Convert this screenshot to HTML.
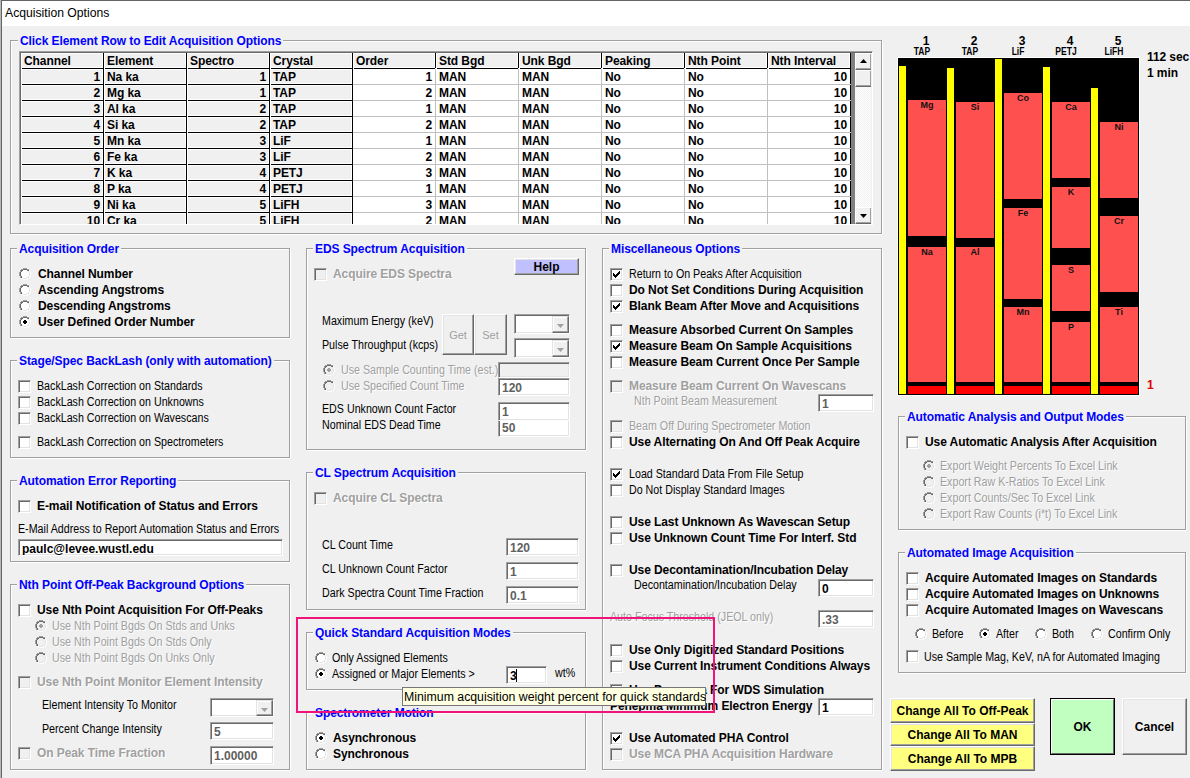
<!DOCTYPE html><html><head><meta charset="utf-8"><title>Acquisition Options</title><style>
*{margin:0;padding:0;box-sizing:border-box}
html,body{width:1190px;height:778px;overflow:hidden;background:#f0f0f0;font-family:"Liberation Sans",sans-serif;position:relative}
div,svg{position:absolute}
.t{white-space:nowrap;line-height:16px;height:16px;color:#000}
.b{font-weight:bold;font-size:12px;letter-spacing:-0.08px}
.n{font-weight:normal;font-size:12px;transform:scaleX(0.89);transform-origin:0 0}
.d{color:#a0a0a0;text-shadow:1px 1px 0 #fff}
.gb{border:1px solid #a0a0a0;box-shadow:inset 1px 1px 0 #fff,1px 1px 0 #fff}
.gt{white-space:nowrap;background:#f0f0f0;color:#0000ff;font-weight:bold;font-size:12px;line-height:16px;height:16px;padding:0 2px;letter-spacing:-0.08px}
.cb{width:13px;height:13px;background:#fff;border:1px solid;border-color:#a0a0a0 #fff #fff #a0a0a0;box-shadow:inset 1px 1px 0 #696969,inset -1px -1px 0 #e3e3e3}
.cb svg{left:1px;top:1px}
.cbd{background:#f0f0f0}
.tb{border-top:1px solid #a0a0a0;border-left:1px solid #a0a0a0;border-right:1px solid #fff;border-bottom:1px solid #fff;box-shadow:inset 1px 1px 0 #696969, inset -1px -1px 0 #e3e3e3;font-weight:bold;font-size:12px;line-height:16px;padding-left:3px;padding-top:1px;white-space:nowrap;overflow:hidden}
.cbtn{right:0;top:1px;width:17px;bottom:0;background:#f0f0f0;border:1px solid #e3e3e3;border-right-color:#696969;border-bottom-color:#696969;box-shadow:inset -1px -1px 0 #a0a0a0,inset 1px 1px 0 #fff}
.btn{text-align:center;white-space:nowrap;border:1px solid #fff;border-right-color:#696969;border-bottom-color:#696969;box-shadow:inset -1px -1px 0 #a0a0a0, inset 1px 1px 0 #e3e3e3}
.gc{position:absolute;overflow:hidden;white-space:nowrap;font-weight:bold;font-size:12px;line-height:16px;letter-spacing:-0.08px}
</style></head><body>
<div style="left:0;top:0;width:1190px;height:26px;background:#fff"></div>
<div style="left:0;top:0;width:1190px;height:1px;background:#646464"></div>
<div style="left:0;top:0;width:1px;height:778px;background:#b8b8b8"></div>
<div style="left:1px;top:0;width:1px;height:778px;background:#646464"></div>
<div class="t" style="left:5px;top:5px;font-size:12.2px;font-weight:normal">Acquisition Options</div>
<div class="gb" style="left:10px;top:40px;width:872px;height:194px"></div>
<div class="gt" style="left:18px;top:33px">Click Element Row to Edit Acquisition Options</div>
<div style="left:19px;top:51px;width:854px;height:174px;border-top:1px solid #a0a0a0;border-left:1px solid #a0a0a0;border-right:1px solid #fff;border-bottom:1px solid #fff;box-shadow:inset 1px 1px 0 #696969"></div>
<div style="left:21px;top:53px;width:850px;height:171px;overflow:hidden;background:#fff">
<div class="gc" style="left:0px;top:0px;width:82px;height:15px;background:#f0f0f0;box-shadow:inset 1px 1px 0 #fff,inset -1px -1px 0 #fff;text-align:left;padding-left:3px;">Channel</div>
<div class="gc" style="left:83px;top:0px;width:82px;height:15px;background:#f0f0f0;box-shadow:inset 1px 1px 0 #fff,inset -1px -1px 0 #fff;text-align:left;padding-left:3px;">Element</div>
<div class="gc" style="left:166px;top:0px;width:82px;height:15px;background:#f0f0f0;box-shadow:inset 1px 1px 0 #fff,inset -1px -1px 0 #fff;text-align:left;padding-left:3px;">Spectro</div>
<div class="gc" style="left:249px;top:0px;width:82px;height:15px;background:#f0f0f0;box-shadow:inset 1px 1px 0 #fff,inset -1px -1px 0 #fff;text-align:left;padding-left:3px;">Crystal</div>
<div class="gc" style="left:332px;top:0px;width:82px;height:15px;background:#f0f0f0;box-shadow:inset 1px 1px 0 #fff,inset -1px -1px 0 #fff;text-align:left;padding-left:3px;">Order</div>
<div class="gc" style="left:415px;top:0px;width:82px;height:15px;background:#f0f0f0;box-shadow:inset 1px 1px 0 #fff,inset -1px -1px 0 #fff;text-align:left;padding-left:3px;">Std Bgd</div>
<div class="gc" style="left:498px;top:0px;width:82px;height:15px;background:#f0f0f0;box-shadow:inset 1px 1px 0 #fff,inset -1px -1px 0 #fff;text-align:left;padding-left:3px;">Unk Bgd</div>
<div class="gc" style="left:581px;top:0px;width:82px;height:15px;background:#f0f0f0;box-shadow:inset 1px 1px 0 #fff,inset -1px -1px 0 #fff;text-align:left;padding-left:3px;">Peaking</div>
<div class="gc" style="left:664px;top:0px;width:82px;height:15px;background:#f0f0f0;box-shadow:inset 1px 1px 0 #fff,inset -1px -1px 0 #fff;text-align:left;padding-left:3px;">Nth Point</div>
<div class="gc" style="left:747px;top:0px;width:82px;height:15px;background:#f0f0f0;box-shadow:inset 1px 1px 0 #fff,inset -1px -1px 0 #fff;text-align:left;padding-left:3px;">Nth Interval</div>
<div class="gc" style="left:0px;top:16px;width:82px;height:15px;background:#f0f0f0;box-shadow:inset 1px 1px 0 #fff,inset -1px -1px 0 #fff;text-align:right;padding-right:3px;">1</div>
<div class="gc" style="left:83px;top:16px;width:82px;height:15px;background:#f0f0f0;box-shadow:inset 1px 1px 0 #fff,inset -1px -1px 0 #fff;text-align:left;padding-left:3px;">Na ka</div>
<div class="gc" style="left:166px;top:16px;width:82px;height:15px;background:#f0f0f0;box-shadow:inset 1px 1px 0 #fff,inset -1px -1px 0 #fff;text-align:right;padding-right:3px;">1</div>
<div class="gc" style="left:249px;top:16px;width:82px;height:15px;background:#f0f0f0;box-shadow:inset 1px 1px 0 #fff,inset -1px -1px 0 #fff;text-align:left;padding-left:3px;">TAP</div>
<div class="gc" style="left:332px;top:16px;width:82px;height:15px;background:#fff;text-align:right;padding-right:3px;">1</div>
<div class="gc" style="left:415px;top:16px;width:82px;height:15px;background:#fff;text-align:left;padding-left:3px;">MAN</div>
<div class="gc" style="left:498px;top:16px;width:82px;height:15px;background:#fff;text-align:left;padding-left:3px;">MAN</div>
<div class="gc" style="left:581px;top:16px;width:82px;height:15px;background:#fff;text-align:left;padding-left:3px;">No</div>
<div class="gc" style="left:664px;top:16px;width:82px;height:15px;background:#fff;text-align:left;padding-left:3px;">No</div>
<div class="gc" style="left:747px;top:16px;width:82px;height:15px;background:#fff;text-align:right;padding-right:3px;">10</div>
<div class="gc" style="left:0px;top:32px;width:82px;height:15px;background:#f0f0f0;box-shadow:inset 1px 1px 0 #fff,inset -1px -1px 0 #fff;text-align:right;padding-right:3px;">2</div>
<div class="gc" style="left:83px;top:32px;width:82px;height:15px;background:#f0f0f0;box-shadow:inset 1px 1px 0 #fff,inset -1px -1px 0 #fff;text-align:left;padding-left:3px;">Mg ka</div>
<div class="gc" style="left:166px;top:32px;width:82px;height:15px;background:#f0f0f0;box-shadow:inset 1px 1px 0 #fff,inset -1px -1px 0 #fff;text-align:right;padding-right:3px;">1</div>
<div class="gc" style="left:249px;top:32px;width:82px;height:15px;background:#f0f0f0;box-shadow:inset 1px 1px 0 #fff,inset -1px -1px 0 #fff;text-align:left;padding-left:3px;">TAP</div>
<div class="gc" style="left:332px;top:32px;width:82px;height:15px;background:#fff;text-align:right;padding-right:3px;">2</div>
<div class="gc" style="left:415px;top:32px;width:82px;height:15px;background:#fff;text-align:left;padding-left:3px;">MAN</div>
<div class="gc" style="left:498px;top:32px;width:82px;height:15px;background:#fff;text-align:left;padding-left:3px;">MAN</div>
<div class="gc" style="left:581px;top:32px;width:82px;height:15px;background:#fff;text-align:left;padding-left:3px;">No</div>
<div class="gc" style="left:664px;top:32px;width:82px;height:15px;background:#fff;text-align:left;padding-left:3px;">No</div>
<div class="gc" style="left:747px;top:32px;width:82px;height:15px;background:#fff;text-align:right;padding-right:3px;">10</div>
<div class="gc" style="left:0px;top:48px;width:82px;height:15px;background:#f0f0f0;box-shadow:inset 1px 1px 0 #fff,inset -1px -1px 0 #fff;text-align:right;padding-right:3px;">3</div>
<div class="gc" style="left:83px;top:48px;width:82px;height:15px;background:#f0f0f0;box-shadow:inset 1px 1px 0 #fff,inset -1px -1px 0 #fff;text-align:left;padding-left:3px;">Al ka</div>
<div class="gc" style="left:166px;top:48px;width:82px;height:15px;background:#f0f0f0;box-shadow:inset 1px 1px 0 #fff,inset -1px -1px 0 #fff;text-align:right;padding-right:3px;">2</div>
<div class="gc" style="left:249px;top:48px;width:82px;height:15px;background:#f0f0f0;box-shadow:inset 1px 1px 0 #fff,inset -1px -1px 0 #fff;text-align:left;padding-left:3px;">TAP</div>
<div class="gc" style="left:332px;top:48px;width:82px;height:15px;background:#fff;text-align:right;padding-right:3px;">1</div>
<div class="gc" style="left:415px;top:48px;width:82px;height:15px;background:#fff;text-align:left;padding-left:3px;">MAN</div>
<div class="gc" style="left:498px;top:48px;width:82px;height:15px;background:#fff;text-align:left;padding-left:3px;">MAN</div>
<div class="gc" style="left:581px;top:48px;width:82px;height:15px;background:#fff;text-align:left;padding-left:3px;">No</div>
<div class="gc" style="left:664px;top:48px;width:82px;height:15px;background:#fff;text-align:left;padding-left:3px;">No</div>
<div class="gc" style="left:747px;top:48px;width:82px;height:15px;background:#fff;text-align:right;padding-right:3px;">10</div>
<div class="gc" style="left:0px;top:64px;width:82px;height:15px;background:#f0f0f0;box-shadow:inset 1px 1px 0 #fff,inset -1px -1px 0 #fff;text-align:right;padding-right:3px;">4</div>
<div class="gc" style="left:83px;top:64px;width:82px;height:15px;background:#f0f0f0;box-shadow:inset 1px 1px 0 #fff,inset -1px -1px 0 #fff;text-align:left;padding-left:3px;">Si ka</div>
<div class="gc" style="left:166px;top:64px;width:82px;height:15px;background:#f0f0f0;box-shadow:inset 1px 1px 0 #fff,inset -1px -1px 0 #fff;text-align:right;padding-right:3px;">2</div>
<div class="gc" style="left:249px;top:64px;width:82px;height:15px;background:#f0f0f0;box-shadow:inset 1px 1px 0 #fff,inset -1px -1px 0 #fff;text-align:left;padding-left:3px;">TAP</div>
<div class="gc" style="left:332px;top:64px;width:82px;height:15px;background:#fff;text-align:right;padding-right:3px;">2</div>
<div class="gc" style="left:415px;top:64px;width:82px;height:15px;background:#fff;text-align:left;padding-left:3px;">MAN</div>
<div class="gc" style="left:498px;top:64px;width:82px;height:15px;background:#fff;text-align:left;padding-left:3px;">MAN</div>
<div class="gc" style="left:581px;top:64px;width:82px;height:15px;background:#fff;text-align:left;padding-left:3px;">No</div>
<div class="gc" style="left:664px;top:64px;width:82px;height:15px;background:#fff;text-align:left;padding-left:3px;">No</div>
<div class="gc" style="left:747px;top:64px;width:82px;height:15px;background:#fff;text-align:right;padding-right:3px;">10</div>
<div class="gc" style="left:0px;top:80px;width:82px;height:15px;background:#f0f0f0;box-shadow:inset 1px 1px 0 #fff,inset -1px -1px 0 #fff;text-align:right;padding-right:3px;">5</div>
<div class="gc" style="left:83px;top:80px;width:82px;height:15px;background:#f0f0f0;box-shadow:inset 1px 1px 0 #fff,inset -1px -1px 0 #fff;text-align:left;padding-left:3px;">Mn ka</div>
<div class="gc" style="left:166px;top:80px;width:82px;height:15px;background:#f0f0f0;box-shadow:inset 1px 1px 0 #fff,inset -1px -1px 0 #fff;text-align:right;padding-right:3px;">3</div>
<div class="gc" style="left:249px;top:80px;width:82px;height:15px;background:#f0f0f0;box-shadow:inset 1px 1px 0 #fff,inset -1px -1px 0 #fff;text-align:left;padding-left:3px;">LiF</div>
<div class="gc" style="left:332px;top:80px;width:82px;height:15px;background:#fff;text-align:right;padding-right:3px;">1</div>
<div class="gc" style="left:415px;top:80px;width:82px;height:15px;background:#fff;text-align:left;padding-left:3px;">MAN</div>
<div class="gc" style="left:498px;top:80px;width:82px;height:15px;background:#fff;text-align:left;padding-left:3px;">MAN</div>
<div class="gc" style="left:581px;top:80px;width:82px;height:15px;background:#fff;text-align:left;padding-left:3px;">No</div>
<div class="gc" style="left:664px;top:80px;width:82px;height:15px;background:#fff;text-align:left;padding-left:3px;">No</div>
<div class="gc" style="left:747px;top:80px;width:82px;height:15px;background:#fff;text-align:right;padding-right:3px;">10</div>
<div class="gc" style="left:0px;top:96px;width:82px;height:15px;background:#f0f0f0;box-shadow:inset 1px 1px 0 #fff,inset -1px -1px 0 #fff;text-align:right;padding-right:3px;">6</div>
<div class="gc" style="left:83px;top:96px;width:82px;height:15px;background:#f0f0f0;box-shadow:inset 1px 1px 0 #fff,inset -1px -1px 0 #fff;text-align:left;padding-left:3px;">Fe ka</div>
<div class="gc" style="left:166px;top:96px;width:82px;height:15px;background:#f0f0f0;box-shadow:inset 1px 1px 0 #fff,inset -1px -1px 0 #fff;text-align:right;padding-right:3px;">3</div>
<div class="gc" style="left:249px;top:96px;width:82px;height:15px;background:#f0f0f0;box-shadow:inset 1px 1px 0 #fff,inset -1px -1px 0 #fff;text-align:left;padding-left:3px;">LiF</div>
<div class="gc" style="left:332px;top:96px;width:82px;height:15px;background:#fff;text-align:right;padding-right:3px;">2</div>
<div class="gc" style="left:415px;top:96px;width:82px;height:15px;background:#fff;text-align:left;padding-left:3px;">MAN</div>
<div class="gc" style="left:498px;top:96px;width:82px;height:15px;background:#fff;text-align:left;padding-left:3px;">MAN</div>
<div class="gc" style="left:581px;top:96px;width:82px;height:15px;background:#fff;text-align:left;padding-left:3px;">No</div>
<div class="gc" style="left:664px;top:96px;width:82px;height:15px;background:#fff;text-align:left;padding-left:3px;">No</div>
<div class="gc" style="left:747px;top:96px;width:82px;height:15px;background:#fff;text-align:right;padding-right:3px;">10</div>
<div class="gc" style="left:0px;top:112px;width:82px;height:15px;background:#f0f0f0;box-shadow:inset 1px 1px 0 #fff,inset -1px -1px 0 #fff;text-align:right;padding-right:3px;">7</div>
<div class="gc" style="left:83px;top:112px;width:82px;height:15px;background:#f0f0f0;box-shadow:inset 1px 1px 0 #fff,inset -1px -1px 0 #fff;text-align:left;padding-left:3px;">K ka</div>
<div class="gc" style="left:166px;top:112px;width:82px;height:15px;background:#f0f0f0;box-shadow:inset 1px 1px 0 #fff,inset -1px -1px 0 #fff;text-align:right;padding-right:3px;">4</div>
<div class="gc" style="left:249px;top:112px;width:82px;height:15px;background:#f0f0f0;box-shadow:inset 1px 1px 0 #fff,inset -1px -1px 0 #fff;text-align:left;padding-left:3px;">PETJ</div>
<div class="gc" style="left:332px;top:112px;width:82px;height:15px;background:#fff;text-align:right;padding-right:3px;">3</div>
<div class="gc" style="left:415px;top:112px;width:82px;height:15px;background:#fff;text-align:left;padding-left:3px;">MAN</div>
<div class="gc" style="left:498px;top:112px;width:82px;height:15px;background:#fff;text-align:left;padding-left:3px;">MAN</div>
<div class="gc" style="left:581px;top:112px;width:82px;height:15px;background:#fff;text-align:left;padding-left:3px;">No</div>
<div class="gc" style="left:664px;top:112px;width:82px;height:15px;background:#fff;text-align:left;padding-left:3px;">No</div>
<div class="gc" style="left:747px;top:112px;width:82px;height:15px;background:#fff;text-align:right;padding-right:3px;">10</div>
<div class="gc" style="left:0px;top:128px;width:82px;height:15px;background:#f0f0f0;box-shadow:inset 1px 1px 0 #fff,inset -1px -1px 0 #fff;text-align:right;padding-right:3px;">8</div>
<div class="gc" style="left:83px;top:128px;width:82px;height:15px;background:#f0f0f0;box-shadow:inset 1px 1px 0 #fff,inset -1px -1px 0 #fff;text-align:left;padding-left:3px;">P ka</div>
<div class="gc" style="left:166px;top:128px;width:82px;height:15px;background:#f0f0f0;box-shadow:inset 1px 1px 0 #fff,inset -1px -1px 0 #fff;text-align:right;padding-right:3px;">4</div>
<div class="gc" style="left:249px;top:128px;width:82px;height:15px;background:#f0f0f0;box-shadow:inset 1px 1px 0 #fff,inset -1px -1px 0 #fff;text-align:left;padding-left:3px;">PETJ</div>
<div class="gc" style="left:332px;top:128px;width:82px;height:15px;background:#fff;text-align:right;padding-right:3px;">1</div>
<div class="gc" style="left:415px;top:128px;width:82px;height:15px;background:#fff;text-align:left;padding-left:3px;">MAN</div>
<div class="gc" style="left:498px;top:128px;width:82px;height:15px;background:#fff;text-align:left;padding-left:3px;">MAN</div>
<div class="gc" style="left:581px;top:128px;width:82px;height:15px;background:#fff;text-align:left;padding-left:3px;">No</div>
<div class="gc" style="left:664px;top:128px;width:82px;height:15px;background:#fff;text-align:left;padding-left:3px;">No</div>
<div class="gc" style="left:747px;top:128px;width:82px;height:15px;background:#fff;text-align:right;padding-right:3px;">10</div>
<div class="gc" style="left:0px;top:144px;width:82px;height:15px;background:#f0f0f0;box-shadow:inset 1px 1px 0 #fff,inset -1px -1px 0 #fff;text-align:right;padding-right:3px;">9</div>
<div class="gc" style="left:83px;top:144px;width:82px;height:15px;background:#f0f0f0;box-shadow:inset 1px 1px 0 #fff,inset -1px -1px 0 #fff;text-align:left;padding-left:3px;">Ni ka</div>
<div class="gc" style="left:166px;top:144px;width:82px;height:15px;background:#f0f0f0;box-shadow:inset 1px 1px 0 #fff,inset -1px -1px 0 #fff;text-align:right;padding-right:3px;">5</div>
<div class="gc" style="left:249px;top:144px;width:82px;height:15px;background:#f0f0f0;box-shadow:inset 1px 1px 0 #fff,inset -1px -1px 0 #fff;text-align:left;padding-left:3px;">LiFH</div>
<div class="gc" style="left:332px;top:144px;width:82px;height:15px;background:#fff;text-align:right;padding-right:3px;">3</div>
<div class="gc" style="left:415px;top:144px;width:82px;height:15px;background:#fff;text-align:left;padding-left:3px;">MAN</div>
<div class="gc" style="left:498px;top:144px;width:82px;height:15px;background:#fff;text-align:left;padding-left:3px;">MAN</div>
<div class="gc" style="left:581px;top:144px;width:82px;height:15px;background:#fff;text-align:left;padding-left:3px;">No</div>
<div class="gc" style="left:664px;top:144px;width:82px;height:15px;background:#fff;text-align:left;padding-left:3px;">No</div>
<div class="gc" style="left:747px;top:144px;width:82px;height:15px;background:#fff;text-align:right;padding-right:3px;">10</div>
<div class="gc" style="left:0px;top:160px;width:82px;height:15px;background:#f0f0f0;box-shadow:inset 1px 1px 0 #fff,inset -1px -1px 0 #fff;text-align:right;padding-right:3px;">10</div>
<div class="gc" style="left:83px;top:160px;width:82px;height:15px;background:#f0f0f0;box-shadow:inset 1px 1px 0 #fff,inset -1px -1px 0 #fff;text-align:left;padding-left:3px;">Cr ka</div>
<div class="gc" style="left:166px;top:160px;width:82px;height:15px;background:#f0f0f0;box-shadow:inset 1px 1px 0 #fff,inset -1px -1px 0 #fff;text-align:right;padding-right:3px;">5</div>
<div class="gc" style="left:249px;top:160px;width:82px;height:15px;background:#f0f0f0;box-shadow:inset 1px 1px 0 #fff,inset -1px -1px 0 #fff;text-align:left;padding-left:3px;">LiFH</div>
<div class="gc" style="left:332px;top:160px;width:82px;height:15px;background:#fff;text-align:right;padding-right:3px;">2</div>
<div class="gc" style="left:415px;top:160px;width:82px;height:15px;background:#fff;text-align:left;padding-left:3px;">MAN</div>
<div class="gc" style="left:498px;top:160px;width:82px;height:15px;background:#fff;text-align:left;padding-left:3px;">MAN</div>
<div class="gc" style="left:581px;top:160px;width:82px;height:15px;background:#fff;text-align:left;padding-left:3px;">No</div>
<div class="gc" style="left:664px;top:160px;width:82px;height:15px;background:#fff;text-align:left;padding-left:3px;">No</div>
<div class="gc" style="left:747px;top:160px;width:82px;height:15px;background:#fff;text-align:right;padding-right:3px;">10</div>
<div style="left:82px;top:0;width:1px;height:171px;background:#000"></div>
<div style="left:165px;top:0;width:1px;height:171px;background:#000"></div>
<div style="left:248px;top:0;width:1px;height:171px;background:#000"></div>
<div style="left:331px;top:0;width:1px;height:171px;background:#000"></div>
<div style="left:414px;top:0;width:1px;height:15px;background:#000"></div>
<div style="left:414px;top:16px;width:1px;height:155px;background:#c0c0c0"></div>
<div style="left:497px;top:0;width:1px;height:15px;background:#000"></div>
<div style="left:497px;top:16px;width:1px;height:155px;background:#c0c0c0"></div>
<div style="left:580px;top:0;width:1px;height:15px;background:#000"></div>
<div style="left:580px;top:16px;width:1px;height:155px;background:#c0c0c0"></div>
<div style="left:663px;top:0;width:1px;height:15px;background:#000"></div>
<div style="left:663px;top:16px;width:1px;height:155px;background:#c0c0c0"></div>
<div style="left:746px;top:0;width:1px;height:15px;background:#000"></div>
<div style="left:746px;top:16px;width:1px;height:155px;background:#c0c0c0"></div>
<div style="left:829px;top:0;width:1px;height:171px;background:#000"></div>
<div style="left:1px;top:15px;width:81px;height:1px;background:#000"></div>
<div style="left:84px;top:15px;width:81px;height:1px;background:#000"></div>
<div style="left:167px;top:15px;width:81px;height:1px;background:#000"></div>
<div style="left:250px;top:15px;width:81px;height:1px;background:#000"></div>
<div style="left:333px;top:15px;width:81px;height:1px;background:#000"></div>
<div style="left:416px;top:15px;width:81px;height:1px;background:#000"></div>
<div style="left:499px;top:15px;width:81px;height:1px;background:#000"></div>
<div style="left:582px;top:15px;width:81px;height:1px;background:#000"></div>
<div style="left:665px;top:15px;width:81px;height:1px;background:#000"></div>
<div style="left:748px;top:15px;width:81px;height:1px;background:#000"></div>
<div style="left:1px;top:31px;width:81px;height:1px;background:#000"></div>
<div style="left:84px;top:31px;width:81px;height:1px;background:#000"></div>
<div style="left:167px;top:31px;width:81px;height:1px;background:#000"></div>
<div style="left:250px;top:31px;width:81px;height:1px;background:#000"></div>
<div style="left:332px;top:31px;width:498px;height:1px;background:#c0c0c0"></div>
<div style="left:1px;top:47px;width:81px;height:1px;background:#000"></div>
<div style="left:84px;top:47px;width:81px;height:1px;background:#000"></div>
<div style="left:167px;top:47px;width:81px;height:1px;background:#000"></div>
<div style="left:250px;top:47px;width:81px;height:1px;background:#000"></div>
<div style="left:332px;top:47px;width:498px;height:1px;background:#c0c0c0"></div>
<div style="left:1px;top:63px;width:81px;height:1px;background:#000"></div>
<div style="left:84px;top:63px;width:81px;height:1px;background:#000"></div>
<div style="left:167px;top:63px;width:81px;height:1px;background:#000"></div>
<div style="left:250px;top:63px;width:81px;height:1px;background:#000"></div>
<div style="left:332px;top:63px;width:498px;height:1px;background:#c0c0c0"></div>
<div style="left:1px;top:79px;width:81px;height:1px;background:#000"></div>
<div style="left:84px;top:79px;width:81px;height:1px;background:#000"></div>
<div style="left:167px;top:79px;width:81px;height:1px;background:#000"></div>
<div style="left:250px;top:79px;width:81px;height:1px;background:#000"></div>
<div style="left:332px;top:79px;width:498px;height:1px;background:#c0c0c0"></div>
<div style="left:1px;top:95px;width:81px;height:1px;background:#000"></div>
<div style="left:84px;top:95px;width:81px;height:1px;background:#000"></div>
<div style="left:167px;top:95px;width:81px;height:1px;background:#000"></div>
<div style="left:250px;top:95px;width:81px;height:1px;background:#000"></div>
<div style="left:332px;top:95px;width:498px;height:1px;background:#c0c0c0"></div>
<div style="left:1px;top:111px;width:81px;height:1px;background:#000"></div>
<div style="left:84px;top:111px;width:81px;height:1px;background:#000"></div>
<div style="left:167px;top:111px;width:81px;height:1px;background:#000"></div>
<div style="left:250px;top:111px;width:81px;height:1px;background:#000"></div>
<div style="left:332px;top:111px;width:498px;height:1px;background:#c0c0c0"></div>
<div style="left:1px;top:127px;width:81px;height:1px;background:#000"></div>
<div style="left:84px;top:127px;width:81px;height:1px;background:#000"></div>
<div style="left:167px;top:127px;width:81px;height:1px;background:#000"></div>
<div style="left:250px;top:127px;width:81px;height:1px;background:#000"></div>
<div style="left:332px;top:127px;width:498px;height:1px;background:#c0c0c0"></div>
<div style="left:1px;top:143px;width:81px;height:1px;background:#000"></div>
<div style="left:84px;top:143px;width:81px;height:1px;background:#000"></div>
<div style="left:167px;top:143px;width:81px;height:1px;background:#000"></div>
<div style="left:250px;top:143px;width:81px;height:1px;background:#000"></div>
<div style="left:332px;top:143px;width:498px;height:1px;background:#c0c0c0"></div>
<div style="left:1px;top:159px;width:81px;height:1px;background:#000"></div>
<div style="left:84px;top:159px;width:81px;height:1px;background:#000"></div>
<div style="left:167px;top:159px;width:81px;height:1px;background:#000"></div>
<div style="left:250px;top:159px;width:81px;height:1px;background:#000"></div>
<div style="left:332px;top:159px;width:498px;height:1px;background:#c0c0c0"></div>
<div style="left:1px;top:175px;width:81px;height:1px;background:#000"></div>
<div style="left:84px;top:175px;width:81px;height:1px;background:#000"></div>
<div style="left:167px;top:175px;width:81px;height:1px;background:#000"></div>
<div style="left:250px;top:175px;width:81px;height:1px;background:#000"></div>
<div style="left:332px;top:175px;width:498px;height:1px;background:#c0c0c0"></div>
<div style="left:830px;top:0;width:4px;height:171px;background:#808080"></div>
<div style="left:834px;top:0;width:17px;height:171px;background:#f4f4f4;background-image:repeating-conic-gradient(#fff 0 25%, #f0f0f0 0 50%);background-size:2px 2px"></div>
<div style="left:834px;top:0px;width:17px;height:17px;background:#f0f0f0;border-top:1px solid #fff;border-left:1px solid #fff;border-right:1px solid #696969;border-bottom:1px solid #696969;box-shadow:inset -1px -1px 0 #a0a0a0"><svg width="17" height="16" style="left:0;top:0"><path d="M4 9h7l-3.5-4z" fill="#000"/></svg></div>
<div style="left:834px;top:17px;width:17px;height:17px;background:#f0f0f0;border-top:1px solid #fff;border-left:1px solid #fff;border-right:1px solid #696969;border-bottom:1px solid #696969;box-shadow:inset -1px -1px 0 #a0a0a0"></div>
<div style="left:834px;top:154px;width:17px;height:17px;background:#f0f0f0;border-top:1px solid #fff;border-left:1px solid #fff;border-right:1px solid #696969;border-bottom:1px solid #696969;box-shadow:inset -1px -1px 0 #a0a0a0"><svg width="17" height="16" style="left:0;top:0"><path d="M4 6h7l-3.5 4z" fill="#000"/></svg></div>
</div>
<div class="gb" style="left:10px;top:248px;width:280px;height:90px"></div>
<div class="gt" style="left:17px;top:241px">Acquisition Order</div>
<svg style="left:19px;top:268px" width="12" height="12"><path d="M5 1h2v1h-2zM3 2h6v1h-6zM3 3h6v1h-6zM2 4h8v1h-8zM2 5h8v1h-8zM2 6h8v1h-8zM2 7h8v1h-8zM3 8h6v1h-6zM3 9h6v1h-6zM5 10h2v1h-2z" fill="#fff"/><path d="M4 0h1v1h-1zM5 0h1v1h-1zM6 0h1v1h-1zM7 0h1v1h-1zM2 1h1v1h-1zM3 1h1v1h-1zM8 1h1v1h-1zM9 1h1v1h-1zM1 2h1v1h-1zM1 3h1v1h-1zM0 4h1v1h-1zM0 5h1v1h-1zM0 6h1v1h-1zM0 7h1v1h-1zM1 8h1v1h-1zM1 9h1v1h-1z" fill="#a0a0a0"/><path d="M10 2h1v1h-1zM10 3h1v1h-1zM11 4h1v1h-1zM11 5h1v1h-1zM11 6h1v1h-1zM11 7h1v1h-1zM10 8h1v1h-1zM10 9h1v1h-1zM2 10h1v1h-1zM3 10h1v1h-1zM8 10h1v1h-1zM9 10h1v1h-1zM4 11h1v1h-1zM5 11h1v1h-1zM6 11h1v1h-1zM7 11h1v1h-1z" fill="#fff"/><path d="M4 1h1v1h-1zM5 1h1v1h-1zM6 1h1v1h-1zM7 1h1v1h-1zM2 2h1v1h-1zM3 2h1v1h-1zM8 2h1v1h-1zM9 2h1v1h-1zM2 3h1v1h-1zM1 4h1v1h-1zM1 5h1v1h-1zM1 6h1v1h-1zM1 7h1v1h-1zM2 8h1v1h-1zM2 9h1v1h-1z" fill="#696969"/><path d="M9 3h1v1h-1zM10 4h1v1h-1zM10 5h1v1h-1zM10 6h1v1h-1zM10 7h1v1h-1zM9 8h1v1h-1zM3 9h1v1h-1zM8 9h1v1h-1zM9 9h1v1h-1zM4 10h1v1h-1zM5 10h1v1h-1zM6 10h1v1h-1zM7 10h1v1h-1z" fill="#e3e3e3"/></svg>
<div class="t b" style="left:38px;top:266px;">Channel Number</div>
<svg style="left:19px;top:284px" width="12" height="12"><path d="M5 1h2v1h-2zM3 2h6v1h-6zM3 3h6v1h-6zM2 4h8v1h-8zM2 5h8v1h-8zM2 6h8v1h-8zM2 7h8v1h-8zM3 8h6v1h-6zM3 9h6v1h-6zM5 10h2v1h-2z" fill="#fff"/><path d="M4 0h1v1h-1zM5 0h1v1h-1zM6 0h1v1h-1zM7 0h1v1h-1zM2 1h1v1h-1zM3 1h1v1h-1zM8 1h1v1h-1zM9 1h1v1h-1zM1 2h1v1h-1zM1 3h1v1h-1zM0 4h1v1h-1zM0 5h1v1h-1zM0 6h1v1h-1zM0 7h1v1h-1zM1 8h1v1h-1zM1 9h1v1h-1z" fill="#a0a0a0"/><path d="M10 2h1v1h-1zM10 3h1v1h-1zM11 4h1v1h-1zM11 5h1v1h-1zM11 6h1v1h-1zM11 7h1v1h-1zM10 8h1v1h-1zM10 9h1v1h-1zM2 10h1v1h-1zM3 10h1v1h-1zM8 10h1v1h-1zM9 10h1v1h-1zM4 11h1v1h-1zM5 11h1v1h-1zM6 11h1v1h-1zM7 11h1v1h-1z" fill="#fff"/><path d="M4 1h1v1h-1zM5 1h1v1h-1zM6 1h1v1h-1zM7 1h1v1h-1zM2 2h1v1h-1zM3 2h1v1h-1zM8 2h1v1h-1zM9 2h1v1h-1zM2 3h1v1h-1zM1 4h1v1h-1zM1 5h1v1h-1zM1 6h1v1h-1zM1 7h1v1h-1zM2 8h1v1h-1zM2 9h1v1h-1z" fill="#696969"/><path d="M9 3h1v1h-1zM10 4h1v1h-1zM10 5h1v1h-1zM10 6h1v1h-1zM10 7h1v1h-1zM9 8h1v1h-1zM3 9h1v1h-1zM8 9h1v1h-1zM9 9h1v1h-1zM4 10h1v1h-1zM5 10h1v1h-1zM6 10h1v1h-1zM7 10h1v1h-1z" fill="#e3e3e3"/></svg>
<div class="t b" style="left:38px;top:282px;">Ascending Angstroms</div>
<svg style="left:19px;top:300px" width="12" height="12"><path d="M5 1h2v1h-2zM3 2h6v1h-6zM3 3h6v1h-6zM2 4h8v1h-8zM2 5h8v1h-8zM2 6h8v1h-8zM2 7h8v1h-8zM3 8h6v1h-6zM3 9h6v1h-6zM5 10h2v1h-2z" fill="#fff"/><path d="M4 0h1v1h-1zM5 0h1v1h-1zM6 0h1v1h-1zM7 0h1v1h-1zM2 1h1v1h-1zM3 1h1v1h-1zM8 1h1v1h-1zM9 1h1v1h-1zM1 2h1v1h-1zM1 3h1v1h-1zM0 4h1v1h-1zM0 5h1v1h-1zM0 6h1v1h-1zM0 7h1v1h-1zM1 8h1v1h-1zM1 9h1v1h-1z" fill="#a0a0a0"/><path d="M10 2h1v1h-1zM10 3h1v1h-1zM11 4h1v1h-1zM11 5h1v1h-1zM11 6h1v1h-1zM11 7h1v1h-1zM10 8h1v1h-1zM10 9h1v1h-1zM2 10h1v1h-1zM3 10h1v1h-1zM8 10h1v1h-1zM9 10h1v1h-1zM4 11h1v1h-1zM5 11h1v1h-1zM6 11h1v1h-1zM7 11h1v1h-1z" fill="#fff"/><path d="M4 1h1v1h-1zM5 1h1v1h-1zM6 1h1v1h-1zM7 1h1v1h-1zM2 2h1v1h-1zM3 2h1v1h-1zM8 2h1v1h-1zM9 2h1v1h-1zM2 3h1v1h-1zM1 4h1v1h-1zM1 5h1v1h-1zM1 6h1v1h-1zM1 7h1v1h-1zM2 8h1v1h-1zM2 9h1v1h-1z" fill="#696969"/><path d="M9 3h1v1h-1zM10 4h1v1h-1zM10 5h1v1h-1zM10 6h1v1h-1zM10 7h1v1h-1zM9 8h1v1h-1zM3 9h1v1h-1zM8 9h1v1h-1zM9 9h1v1h-1zM4 10h1v1h-1zM5 10h1v1h-1zM6 10h1v1h-1zM7 10h1v1h-1z" fill="#e3e3e3"/></svg>
<div class="t b" style="left:38px;top:298px;">Descending Angstroms</div>
<svg style="left:19px;top:316px" width="12" height="12"><path d="M5 1h2v1h-2zM3 2h6v1h-6zM3 3h6v1h-6zM2 4h8v1h-8zM2 5h8v1h-8zM2 6h8v1h-8zM2 7h8v1h-8zM3 8h6v1h-6zM3 9h6v1h-6zM5 10h2v1h-2z" fill="#fff"/><path d="M4 0h1v1h-1zM5 0h1v1h-1zM6 0h1v1h-1zM7 0h1v1h-1zM2 1h1v1h-1zM3 1h1v1h-1zM8 1h1v1h-1zM9 1h1v1h-1zM1 2h1v1h-1zM1 3h1v1h-1zM0 4h1v1h-1zM0 5h1v1h-1zM0 6h1v1h-1zM0 7h1v1h-1zM1 8h1v1h-1zM1 9h1v1h-1z" fill="#a0a0a0"/><path d="M10 2h1v1h-1zM10 3h1v1h-1zM11 4h1v1h-1zM11 5h1v1h-1zM11 6h1v1h-1zM11 7h1v1h-1zM10 8h1v1h-1zM10 9h1v1h-1zM2 10h1v1h-1zM3 10h1v1h-1zM8 10h1v1h-1zM9 10h1v1h-1zM4 11h1v1h-1zM5 11h1v1h-1zM6 11h1v1h-1zM7 11h1v1h-1z" fill="#fff"/><path d="M4 1h1v1h-1zM5 1h1v1h-1zM6 1h1v1h-1zM7 1h1v1h-1zM2 2h1v1h-1zM3 2h1v1h-1zM8 2h1v1h-1zM9 2h1v1h-1zM2 3h1v1h-1zM1 4h1v1h-1zM1 5h1v1h-1zM1 6h1v1h-1zM1 7h1v1h-1zM2 8h1v1h-1zM2 9h1v1h-1z" fill="#696969"/><path d="M9 3h1v1h-1zM10 4h1v1h-1zM10 5h1v1h-1zM10 6h1v1h-1zM10 7h1v1h-1zM9 8h1v1h-1zM3 9h1v1h-1zM8 9h1v1h-1zM9 9h1v1h-1zM4 10h1v1h-1zM5 10h1v1h-1zM6 10h1v1h-1zM7 10h1v1h-1z" fill="#e3e3e3"/><path d="M5 4h2v1h1v2h-1v1h-2v-1h-1v-2h1z" fill="#000"/></svg>
<div class="t b" style="left:38px;top:314px;">User Defined Order Number</div>
<div class="gb" style="left:10px;top:360px;width:280px;height:98px"></div>
<div class="gt" style="left:17px;top:353px">Stage/Spec BackLash (only with automation)</div>
<div class="cb" style="left:18px;top:380px"></div>
<div class="t n" style="left:37px;top:378px;">BackLash Correction on Standards</div>
<div class="cb" style="left:18px;top:396px"></div>
<div class="t n" style="left:37px;top:394px;">BackLash Correction on Unknowns</div>
<div class="cb" style="left:18px;top:412px"></div>
<div class="t n" style="left:37px;top:410px;">BackLash Correction on Wavescans</div>
<div class="cb" style="left:18px;top:436px"></div>
<div class="t n" style="left:37px;top:434px;">BackLash Correction on Spectrometers</div>
<div class="gb" style="left:10px;top:480px;width:280px;height:82px"></div>
<div class="gt" style="left:17px;top:473px">Automation Error Reporting</div>
<div class="cb" style="left:18px;top:500px"></div>
<div class="t b" style="left:37px;top:498px;">E-mail Notification of Status and Errors</div>
<div class="t n" style="left:18px;top:521px;">E-Mail Address to Report Automation Status and Errors</div>
<div class="tb" style="left:18px;top:539px;width:265px;height:17px;background:#fff;color:#000;">paulc@levee.wustl.edu</div>
<div class="gb" style="left:10px;top:584px;width:280px;height:186px"></div>
<div class="gt" style="left:17px;top:577px">Nth Point Off-Peak Background Options</div>
<div class="cb" style="left:18px;top:604px"></div>
<div class="t b" style="left:37px;top:602px;">Use Nth Point Acquisition For Off-Peaks</div>
<svg style="left:35px;top:620px" width="12" height="12"><path d="M5 1h2v1h-2zM3 2h6v1h-6zM3 3h6v1h-6zM2 4h8v1h-8zM2 5h8v1h-8zM2 6h8v1h-8zM2 7h8v1h-8zM3 8h6v1h-6zM3 9h6v1h-6zM5 10h2v1h-2z" fill="#f0f0f0"/><path d="M4 0h1v1h-1zM5 0h1v1h-1zM6 0h1v1h-1zM7 0h1v1h-1zM2 1h1v1h-1zM3 1h1v1h-1zM8 1h1v1h-1zM9 1h1v1h-1zM1 2h1v1h-1zM1 3h1v1h-1zM0 4h1v1h-1zM0 5h1v1h-1zM0 6h1v1h-1zM0 7h1v1h-1zM1 8h1v1h-1zM1 9h1v1h-1z" fill="#a0a0a0"/><path d="M10 2h1v1h-1zM10 3h1v1h-1zM11 4h1v1h-1zM11 5h1v1h-1zM11 6h1v1h-1zM11 7h1v1h-1zM10 8h1v1h-1zM10 9h1v1h-1zM2 10h1v1h-1zM3 10h1v1h-1zM8 10h1v1h-1zM9 10h1v1h-1zM4 11h1v1h-1zM5 11h1v1h-1zM6 11h1v1h-1zM7 11h1v1h-1z" fill="#fff"/><path d="M4 1h1v1h-1zM5 1h1v1h-1zM6 1h1v1h-1zM7 1h1v1h-1zM2 2h1v1h-1zM3 2h1v1h-1zM8 2h1v1h-1zM9 2h1v1h-1zM2 3h1v1h-1zM1 4h1v1h-1zM1 5h1v1h-1zM1 6h1v1h-1zM1 7h1v1h-1zM2 8h1v1h-1zM2 9h1v1h-1z" fill="#696969"/><path d="M9 3h1v1h-1zM10 4h1v1h-1zM10 5h1v1h-1zM10 6h1v1h-1zM10 7h1v1h-1zM9 8h1v1h-1zM3 9h1v1h-1zM8 9h1v1h-1zM9 9h1v1h-1zM4 10h1v1h-1zM5 10h1v1h-1zM6 10h1v1h-1zM7 10h1v1h-1z" fill="#e3e3e3"/><path d="M5 4h2v1h1v2h-1v1h-2v-1h-1v-2h1z" fill="#a0a0a0"/></svg>
<div class="t n d" style="left:52px;top:618px;">Use Nth Point Bgds On Stds and Unks</div>
<svg style="left:35px;top:636px" width="12" height="12"><path d="M5 1h2v1h-2zM3 2h6v1h-6zM3 3h6v1h-6zM2 4h8v1h-8zM2 5h8v1h-8zM2 6h8v1h-8zM2 7h8v1h-8zM3 8h6v1h-6zM3 9h6v1h-6zM5 10h2v1h-2z" fill="#f0f0f0"/><path d="M4 0h1v1h-1zM5 0h1v1h-1zM6 0h1v1h-1zM7 0h1v1h-1zM2 1h1v1h-1zM3 1h1v1h-1zM8 1h1v1h-1zM9 1h1v1h-1zM1 2h1v1h-1zM1 3h1v1h-1zM0 4h1v1h-1zM0 5h1v1h-1zM0 6h1v1h-1zM0 7h1v1h-1zM1 8h1v1h-1zM1 9h1v1h-1z" fill="#a0a0a0"/><path d="M10 2h1v1h-1zM10 3h1v1h-1zM11 4h1v1h-1zM11 5h1v1h-1zM11 6h1v1h-1zM11 7h1v1h-1zM10 8h1v1h-1zM10 9h1v1h-1zM2 10h1v1h-1zM3 10h1v1h-1zM8 10h1v1h-1zM9 10h1v1h-1zM4 11h1v1h-1zM5 11h1v1h-1zM6 11h1v1h-1zM7 11h1v1h-1z" fill="#fff"/><path d="M4 1h1v1h-1zM5 1h1v1h-1zM6 1h1v1h-1zM7 1h1v1h-1zM2 2h1v1h-1zM3 2h1v1h-1zM8 2h1v1h-1zM9 2h1v1h-1zM2 3h1v1h-1zM1 4h1v1h-1zM1 5h1v1h-1zM1 6h1v1h-1zM1 7h1v1h-1zM2 8h1v1h-1zM2 9h1v1h-1z" fill="#696969"/><path d="M9 3h1v1h-1zM10 4h1v1h-1zM10 5h1v1h-1zM10 6h1v1h-1zM10 7h1v1h-1zM9 8h1v1h-1zM3 9h1v1h-1zM8 9h1v1h-1zM9 9h1v1h-1zM4 10h1v1h-1zM5 10h1v1h-1zM6 10h1v1h-1zM7 10h1v1h-1z" fill="#e3e3e3"/></svg>
<div class="t n d" style="left:52px;top:634px;">Use Nth Point Bgds On Stds Only</div>
<svg style="left:35px;top:652px" width="12" height="12"><path d="M5 1h2v1h-2zM3 2h6v1h-6zM3 3h6v1h-6zM2 4h8v1h-8zM2 5h8v1h-8zM2 6h8v1h-8zM2 7h8v1h-8zM3 8h6v1h-6zM3 9h6v1h-6zM5 10h2v1h-2z" fill="#f0f0f0"/><path d="M4 0h1v1h-1zM5 0h1v1h-1zM6 0h1v1h-1zM7 0h1v1h-1zM2 1h1v1h-1zM3 1h1v1h-1zM8 1h1v1h-1zM9 1h1v1h-1zM1 2h1v1h-1zM1 3h1v1h-1zM0 4h1v1h-1zM0 5h1v1h-1zM0 6h1v1h-1zM0 7h1v1h-1zM1 8h1v1h-1zM1 9h1v1h-1z" fill="#a0a0a0"/><path d="M10 2h1v1h-1zM10 3h1v1h-1zM11 4h1v1h-1zM11 5h1v1h-1zM11 6h1v1h-1zM11 7h1v1h-1zM10 8h1v1h-1zM10 9h1v1h-1zM2 10h1v1h-1zM3 10h1v1h-1zM8 10h1v1h-1zM9 10h1v1h-1zM4 11h1v1h-1zM5 11h1v1h-1zM6 11h1v1h-1zM7 11h1v1h-1z" fill="#fff"/><path d="M4 1h1v1h-1zM5 1h1v1h-1zM6 1h1v1h-1zM7 1h1v1h-1zM2 2h1v1h-1zM3 2h1v1h-1zM8 2h1v1h-1zM9 2h1v1h-1zM2 3h1v1h-1zM1 4h1v1h-1zM1 5h1v1h-1zM1 6h1v1h-1zM1 7h1v1h-1zM2 8h1v1h-1zM2 9h1v1h-1z" fill="#696969"/><path d="M9 3h1v1h-1zM10 4h1v1h-1zM10 5h1v1h-1zM10 6h1v1h-1zM10 7h1v1h-1zM9 8h1v1h-1zM3 9h1v1h-1zM8 9h1v1h-1zM9 9h1v1h-1zM4 10h1v1h-1zM5 10h1v1h-1zM6 10h1v1h-1zM7 10h1v1h-1z" fill="#e3e3e3"/></svg>
<div class="t n d" style="left:52px;top:650px;">Use Nth Point Bgds On Unks Only</div>
<div class="cb cbd" style="left:18px;top:676px"></div>
<div class="t b d" style="left:37px;top:674px;">Use Nth Point Monitor Element Intensity</div>
<div class="t n" style="left:42px;top:697px;">Element Intensity To Monitor</div>
<div class="tb" style="left:210px;top:698px;width:64px;height:19px;background:#fff"><div class="cbtn"><svg width="16" height="16" style="left:0;top:0"><path d="M4 7h7l-3.5 4z" fill="#a0a0a0"/></svg></div></div>
<div class="t n" style="left:42px;top:721px;">Percent Change Intensity</div>
<div class="tb" style="left:210px;top:722px;width:64px;height:18px;background:#fff;color:#606060;">5</div>
<div class="cb cbd" style="left:18px;top:747px"></div>
<div class="t b d" style="left:37px;top:745px;">On Peak Time Fraction</div>
<div class="tb" style="left:210px;top:746px;width:64px;height:19px;background:#fff;color:#606060;">1.00000</div>
<div class="gb" style="left:306px;top:248px;width:280px;height:202px"></div>
<div class="gt" style="left:313px;top:241px">EDS Spectrum Acquisition</div>
<div class="btn" style="left:514px;top:258px;width:65px;height:17px;background:#c0c0ff;color:#000;font-weight:bold;line-height:16px;font-size:12px;">Help</div>
<div class="cb cbd" style="left:314px;top:268px"></div>
<div class="t b d" style="left:333px;top:266px;">Acquire EDS Spectra</div>
<div class="t n" style="left:322px;top:313px;">Maximum Energy (keV)</div>
<div class="t n" style="left:322px;top:337px;">Pulse Throughput (kcps)</div>
<div class="btn" style="left:442px;top:314px;width:32px;height:41px;background:#f0f0f0;color:#a0a0a0;font-weight:normal;line-height:40px;font-size:11px;">Get</div>
<div class="btn" style="left:474px;top:314px;width:33px;height:41px;background:#f0f0f0;color:#a0a0a0;font-weight:normal;line-height:40px;font-size:11px;">Set</div>
<div class="tb" style="left:514px;top:314px;width:56px;height:20px;background:#fff"><div class="cbtn"><svg width="16" height="16" style="left:0;top:0"><path d="M4 7h7l-3.5 4z" fill="#a0a0a0"/></svg></div></div>
<div class="tb" style="left:514px;top:338px;width:56px;height:20px;background:#fff"><div class="cbtn"><svg width="16" height="16" style="left:0;top:0"><path d="M4 7h7l-3.5 4z" fill="#a0a0a0"/></svg></div></div>
<svg style="left:323px;top:364px" width="12" height="12"><path d="M5 1h2v1h-2zM3 2h6v1h-6zM3 3h6v1h-6zM2 4h8v1h-8zM2 5h8v1h-8zM2 6h8v1h-8zM2 7h8v1h-8zM3 8h6v1h-6zM3 9h6v1h-6zM5 10h2v1h-2z" fill="#f0f0f0"/><path d="M4 0h1v1h-1zM5 0h1v1h-1zM6 0h1v1h-1zM7 0h1v1h-1zM2 1h1v1h-1zM3 1h1v1h-1zM8 1h1v1h-1zM9 1h1v1h-1zM1 2h1v1h-1zM1 3h1v1h-1zM0 4h1v1h-1zM0 5h1v1h-1zM0 6h1v1h-1zM0 7h1v1h-1zM1 8h1v1h-1zM1 9h1v1h-1z" fill="#a0a0a0"/><path d="M10 2h1v1h-1zM10 3h1v1h-1zM11 4h1v1h-1zM11 5h1v1h-1zM11 6h1v1h-1zM11 7h1v1h-1zM10 8h1v1h-1zM10 9h1v1h-1zM2 10h1v1h-1zM3 10h1v1h-1zM8 10h1v1h-1zM9 10h1v1h-1zM4 11h1v1h-1zM5 11h1v1h-1zM6 11h1v1h-1zM7 11h1v1h-1z" fill="#fff"/><path d="M4 1h1v1h-1zM5 1h1v1h-1zM6 1h1v1h-1zM7 1h1v1h-1zM2 2h1v1h-1zM3 2h1v1h-1zM8 2h1v1h-1zM9 2h1v1h-1zM2 3h1v1h-1zM1 4h1v1h-1zM1 5h1v1h-1zM1 6h1v1h-1zM1 7h1v1h-1zM2 8h1v1h-1zM2 9h1v1h-1z" fill="#696969"/><path d="M9 3h1v1h-1zM10 4h1v1h-1zM10 5h1v1h-1zM10 6h1v1h-1zM10 7h1v1h-1zM9 8h1v1h-1zM3 9h1v1h-1zM8 9h1v1h-1zM9 9h1v1h-1zM4 10h1v1h-1zM5 10h1v1h-1zM6 10h1v1h-1zM7 10h1v1h-1z" fill="#e3e3e3"/><path d="M5 4h2v1h1v2h-1v1h-2v-1h-1v-2h1z" fill="#a0a0a0"/></svg>
<div class="t n d" style="left:341px;top:362px;">Use Sample Counting Time (est.)</div>
<svg style="left:323px;top:380px" width="12" height="12"><path d="M5 1h2v1h-2zM3 2h6v1h-6zM3 3h6v1h-6zM2 4h8v1h-8zM2 5h8v1h-8zM2 6h8v1h-8zM2 7h8v1h-8zM3 8h6v1h-6zM3 9h6v1h-6zM5 10h2v1h-2z" fill="#f0f0f0"/><path d="M4 0h1v1h-1zM5 0h1v1h-1zM6 0h1v1h-1zM7 0h1v1h-1zM2 1h1v1h-1zM3 1h1v1h-1zM8 1h1v1h-1zM9 1h1v1h-1zM1 2h1v1h-1zM1 3h1v1h-1zM0 4h1v1h-1zM0 5h1v1h-1zM0 6h1v1h-1zM0 7h1v1h-1zM1 8h1v1h-1zM1 9h1v1h-1z" fill="#a0a0a0"/><path d="M10 2h1v1h-1zM10 3h1v1h-1zM11 4h1v1h-1zM11 5h1v1h-1zM11 6h1v1h-1zM11 7h1v1h-1zM10 8h1v1h-1zM10 9h1v1h-1zM2 10h1v1h-1zM3 10h1v1h-1zM8 10h1v1h-1zM9 10h1v1h-1zM4 11h1v1h-1zM5 11h1v1h-1zM6 11h1v1h-1zM7 11h1v1h-1z" fill="#fff"/><path d="M4 1h1v1h-1zM5 1h1v1h-1zM6 1h1v1h-1zM7 1h1v1h-1zM2 2h1v1h-1zM3 2h1v1h-1zM8 2h1v1h-1zM9 2h1v1h-1zM2 3h1v1h-1zM1 4h1v1h-1zM1 5h1v1h-1zM1 6h1v1h-1zM1 7h1v1h-1zM2 8h1v1h-1zM2 9h1v1h-1z" fill="#696969"/><path d="M9 3h1v1h-1zM10 4h1v1h-1zM10 5h1v1h-1zM10 6h1v1h-1zM10 7h1v1h-1zM9 8h1v1h-1zM3 9h1v1h-1zM8 9h1v1h-1zM9 9h1v1h-1zM4 10h1v1h-1zM5 10h1v1h-1zM6 10h1v1h-1zM7 10h1v1h-1z" fill="#e3e3e3"/></svg>
<div class="t n d" style="left:341px;top:378px;">Use Specified Count Time</div>
<div class="tb" style="left:498px;top:362px;width:72px;height:16px;background:#f0f0f0;color:#000;"></div>
<div class="tb" style="left:498px;top:378px;width:72px;height:18px;background:#fff;color:#606060;">120</div>
<div class="t n" style="left:322px;top:401px;">EDS Unknown Count Factor</div>
<div class="t n" style="left:322px;top:417px;">Nominal EDS Dead Time</div>
<div class="tb" style="left:498px;top:402px;width:72px;height:19px;background:#fff;color:#606060;">1</div>
<div class="tb" style="left:498px;top:420px;width:72px;height:17px;background:#fff;color:#606060;border-top-color:#fff;box-shadow:inset 1px 0 0 #696969, inset -1px -1px 0 #e3e3e3;padding-top:0;line-height:14px;">50</div>
<div class="gb" style="left:306px;top:472px;width:280px;height:138px"></div>
<div class="gt" style="left:313px;top:465px">CL Spectrum Acquisition</div>
<div class="cb cbd" style="left:314px;top:492px"></div>
<div class="t b d" style="left:333px;top:490px;">Acquire CL Spectra</div>
<div class="t n" style="left:322px;top:537px;">CL Count Time</div>
<div class="t n" style="left:322px;top:561px;">CL Unknown Count Factor</div>
<div class="t n" style="left:322px;top:585px;">Dark Spectra Count Time Fraction</div>
<div class="tb" style="left:506px;top:538px;width:73px;height:18px;background:#fff;color:#606060;">120</div>
<div class="tb" style="left:506px;top:562px;width:73px;height:18px;background:#fff;color:#606060;">1</div>
<div class="tb" style="left:506px;top:586px;width:73px;height:18px;background:#fff;color:#606060;">0.1</div>
<div class="gb" style="left:306px;top:632px;width:280px;height:58px"></div>
<div class="gt" style="left:313px;top:625px">Quick Standard Acquisition Modes</div>
<svg style="left:315px;top:652px" width="12" height="12"><path d="M5 1h2v1h-2zM3 2h6v1h-6zM3 3h6v1h-6zM2 4h8v1h-8zM2 5h8v1h-8zM2 6h8v1h-8zM2 7h8v1h-8zM3 8h6v1h-6zM3 9h6v1h-6zM5 10h2v1h-2z" fill="#fff"/><path d="M4 0h1v1h-1zM5 0h1v1h-1zM6 0h1v1h-1zM7 0h1v1h-1zM2 1h1v1h-1zM3 1h1v1h-1zM8 1h1v1h-1zM9 1h1v1h-1zM1 2h1v1h-1zM1 3h1v1h-1zM0 4h1v1h-1zM0 5h1v1h-1zM0 6h1v1h-1zM0 7h1v1h-1zM1 8h1v1h-1zM1 9h1v1h-1z" fill="#a0a0a0"/><path d="M10 2h1v1h-1zM10 3h1v1h-1zM11 4h1v1h-1zM11 5h1v1h-1zM11 6h1v1h-1zM11 7h1v1h-1zM10 8h1v1h-1zM10 9h1v1h-1zM2 10h1v1h-1zM3 10h1v1h-1zM8 10h1v1h-1zM9 10h1v1h-1zM4 11h1v1h-1zM5 11h1v1h-1zM6 11h1v1h-1zM7 11h1v1h-1z" fill="#fff"/><path d="M4 1h1v1h-1zM5 1h1v1h-1zM6 1h1v1h-1zM7 1h1v1h-1zM2 2h1v1h-1zM3 2h1v1h-1zM8 2h1v1h-1zM9 2h1v1h-1zM2 3h1v1h-1zM1 4h1v1h-1zM1 5h1v1h-1zM1 6h1v1h-1zM1 7h1v1h-1zM2 8h1v1h-1zM2 9h1v1h-1z" fill="#696969"/><path d="M9 3h1v1h-1zM10 4h1v1h-1zM10 5h1v1h-1zM10 6h1v1h-1zM10 7h1v1h-1zM9 8h1v1h-1zM3 9h1v1h-1zM8 9h1v1h-1zM9 9h1v1h-1zM4 10h1v1h-1zM5 10h1v1h-1zM6 10h1v1h-1zM7 10h1v1h-1z" fill="#e3e3e3"/></svg>
<div class="t n" style="left:332px;top:650px;">Only Assigned Elements</div>
<svg style="left:315px;top:668px" width="12" height="12"><path d="M5 1h2v1h-2zM3 2h6v1h-6zM3 3h6v1h-6zM2 4h8v1h-8zM2 5h8v1h-8zM2 6h8v1h-8zM2 7h8v1h-8zM3 8h6v1h-6zM3 9h6v1h-6zM5 10h2v1h-2z" fill="#fff"/><path d="M4 0h1v1h-1zM5 0h1v1h-1zM6 0h1v1h-1zM7 0h1v1h-1zM2 1h1v1h-1zM3 1h1v1h-1zM8 1h1v1h-1zM9 1h1v1h-1zM1 2h1v1h-1zM1 3h1v1h-1zM0 4h1v1h-1zM0 5h1v1h-1zM0 6h1v1h-1zM0 7h1v1h-1zM1 8h1v1h-1zM1 9h1v1h-1z" fill="#a0a0a0"/><path d="M10 2h1v1h-1zM10 3h1v1h-1zM11 4h1v1h-1zM11 5h1v1h-1zM11 6h1v1h-1zM11 7h1v1h-1zM10 8h1v1h-1zM10 9h1v1h-1zM2 10h1v1h-1zM3 10h1v1h-1zM8 10h1v1h-1zM9 10h1v1h-1zM4 11h1v1h-1zM5 11h1v1h-1zM6 11h1v1h-1zM7 11h1v1h-1z" fill="#fff"/><path d="M4 1h1v1h-1zM5 1h1v1h-1zM6 1h1v1h-1zM7 1h1v1h-1zM2 2h1v1h-1zM3 2h1v1h-1zM8 2h1v1h-1zM9 2h1v1h-1zM2 3h1v1h-1zM1 4h1v1h-1zM1 5h1v1h-1zM1 6h1v1h-1zM1 7h1v1h-1zM2 8h1v1h-1zM2 9h1v1h-1z" fill="#696969"/><path d="M9 3h1v1h-1zM10 4h1v1h-1zM10 5h1v1h-1zM10 6h1v1h-1zM10 7h1v1h-1zM9 8h1v1h-1zM3 9h1v1h-1zM8 9h1v1h-1zM9 9h1v1h-1zM4 10h1v1h-1zM5 10h1v1h-1zM6 10h1v1h-1zM7 10h1v1h-1z" fill="#e3e3e3"/><path d="M5 4h2v1h1v2h-1v1h-2v-1h-1v-2h1z" fill="#000"/></svg>
<div class="t n" style="left:332px;top:666px;">Assigned or Major Elements &gt;</div>
<div class="tb" style="left:506px;top:666px;width:41px;height:18px;background:#fff;color:#000;">3</div>
<div style="left:516px;top:669px;width:1px;height:13px;background:#000"></div>
<div class="t n" style="left:555px;top:665px;">wt%</div>
<div class="gb" style="left:306px;top:712px;width:280px;height:58px"></div>
<div class="gt" style="left:313px;top:705px">Spectrometer Motion</div>
<svg style="left:315px;top:732px" width="12" height="12"><path d="M5 1h2v1h-2zM3 2h6v1h-6zM3 3h6v1h-6zM2 4h8v1h-8zM2 5h8v1h-8zM2 6h8v1h-8zM2 7h8v1h-8zM3 8h6v1h-6zM3 9h6v1h-6zM5 10h2v1h-2z" fill="#fff"/><path d="M4 0h1v1h-1zM5 0h1v1h-1zM6 0h1v1h-1zM7 0h1v1h-1zM2 1h1v1h-1zM3 1h1v1h-1zM8 1h1v1h-1zM9 1h1v1h-1zM1 2h1v1h-1zM1 3h1v1h-1zM0 4h1v1h-1zM0 5h1v1h-1zM0 6h1v1h-1zM0 7h1v1h-1zM1 8h1v1h-1zM1 9h1v1h-1z" fill="#a0a0a0"/><path d="M10 2h1v1h-1zM10 3h1v1h-1zM11 4h1v1h-1zM11 5h1v1h-1zM11 6h1v1h-1zM11 7h1v1h-1zM10 8h1v1h-1zM10 9h1v1h-1zM2 10h1v1h-1zM3 10h1v1h-1zM8 10h1v1h-1zM9 10h1v1h-1zM4 11h1v1h-1zM5 11h1v1h-1zM6 11h1v1h-1zM7 11h1v1h-1z" fill="#fff"/><path d="M4 1h1v1h-1zM5 1h1v1h-1zM6 1h1v1h-1zM7 1h1v1h-1zM2 2h1v1h-1zM3 2h1v1h-1zM8 2h1v1h-1zM9 2h1v1h-1zM2 3h1v1h-1zM1 4h1v1h-1zM1 5h1v1h-1zM1 6h1v1h-1zM1 7h1v1h-1zM2 8h1v1h-1zM2 9h1v1h-1z" fill="#696969"/><path d="M9 3h1v1h-1zM10 4h1v1h-1zM10 5h1v1h-1zM10 6h1v1h-1zM10 7h1v1h-1zM9 8h1v1h-1zM3 9h1v1h-1zM8 9h1v1h-1zM9 9h1v1h-1zM4 10h1v1h-1zM5 10h1v1h-1zM6 10h1v1h-1zM7 10h1v1h-1z" fill="#e3e3e3"/><path d="M5 4h2v1h1v2h-1v1h-2v-1h-1v-2h1z" fill="#000"/></svg>
<div class="t b" style="left:333px;top:730px;">Asynchronous</div>
<svg style="left:315px;top:748px" width="12" height="12"><path d="M5 1h2v1h-2zM3 2h6v1h-6zM3 3h6v1h-6zM2 4h8v1h-8zM2 5h8v1h-8zM2 6h8v1h-8zM2 7h8v1h-8zM3 8h6v1h-6zM3 9h6v1h-6zM5 10h2v1h-2z" fill="#fff"/><path d="M4 0h1v1h-1zM5 0h1v1h-1zM6 0h1v1h-1zM7 0h1v1h-1zM2 1h1v1h-1zM3 1h1v1h-1zM8 1h1v1h-1zM9 1h1v1h-1zM1 2h1v1h-1zM1 3h1v1h-1zM0 4h1v1h-1zM0 5h1v1h-1zM0 6h1v1h-1zM0 7h1v1h-1zM1 8h1v1h-1zM1 9h1v1h-1z" fill="#a0a0a0"/><path d="M10 2h1v1h-1zM10 3h1v1h-1zM11 4h1v1h-1zM11 5h1v1h-1zM11 6h1v1h-1zM11 7h1v1h-1zM10 8h1v1h-1zM10 9h1v1h-1zM2 10h1v1h-1zM3 10h1v1h-1zM8 10h1v1h-1zM9 10h1v1h-1zM4 11h1v1h-1zM5 11h1v1h-1zM6 11h1v1h-1zM7 11h1v1h-1z" fill="#fff"/><path d="M4 1h1v1h-1zM5 1h1v1h-1zM6 1h1v1h-1zM7 1h1v1h-1zM2 2h1v1h-1zM3 2h1v1h-1zM8 2h1v1h-1zM9 2h1v1h-1zM2 3h1v1h-1zM1 4h1v1h-1zM1 5h1v1h-1zM1 6h1v1h-1zM1 7h1v1h-1zM2 8h1v1h-1zM2 9h1v1h-1z" fill="#696969"/><path d="M9 3h1v1h-1zM10 4h1v1h-1zM10 5h1v1h-1zM10 6h1v1h-1zM10 7h1v1h-1zM9 8h1v1h-1zM3 9h1v1h-1zM8 9h1v1h-1zM9 9h1v1h-1zM4 10h1v1h-1zM5 10h1v1h-1zM6 10h1v1h-1zM7 10h1v1h-1z" fill="#e3e3e3"/></svg>
<div class="t b" style="left:333px;top:746px;">Synchronous</div>
<div class="gb" style="left:602px;top:248px;width:280px;height:522px"></div>
<div class="gt" style="left:609px;top:241px">Miscellaneous Options</div>
<div class="cb" style="left:610px;top:268px"><svg width="11" height="11"><path d="M1 3h1v3h-1zM2 4h1v3h-1zM3 5h1v3h-1zM4 4h1v3h-1zM5 3h1v3h-1zM6 2h1v3h-1zM7 1h1v3h-1z" fill="#000"/></svg></div>
<div class="t n" style="left:629px;top:266px;">Return to On Peaks After Acquisition</div>
<div class="cb" style="left:610px;top:284px"></div>
<div class="t b" style="left:629px;top:282px;">Do Not Set Conditions During Acquisition</div>
<div class="cb" style="left:610px;top:300px"><svg width="11" height="11"><path d="M1 3h1v3h-1zM2 4h1v3h-1zM3 5h1v3h-1zM4 4h1v3h-1zM5 3h1v3h-1zM6 2h1v3h-1zM7 1h1v3h-1z" fill="#000"/></svg></div>
<div class="t b" style="left:629px;top:298px;">Blank Beam After Move and Acquisitions</div>
<div class="cb" style="left:610px;top:324px"></div>
<div class="t b" style="left:629px;top:322px;">Measure Absorbed Current On Samples</div>
<div class="cb" style="left:610px;top:340px"><svg width="11" height="11"><path d="M1 3h1v3h-1zM2 4h1v3h-1zM3 5h1v3h-1zM4 4h1v3h-1zM5 3h1v3h-1zM6 2h1v3h-1zM7 1h1v3h-1z" fill="#000"/></svg></div>
<div class="t b" style="left:629px;top:338px;">Measure Beam On Sample Acquisitions</div>
<div class="cb" style="left:610px;top:356px"></div>
<div class="t b" style="left:629px;top:354px;">Measure Beam Current Once Per Sample</div>
<div class="cb cbd" style="left:610px;top:380px"></div>
<div class="t b d" style="left:629px;top:378px;">Measure Beam Current On Wavescans</div>
<div class="t n d" style="left:634px;top:393px;">Nth Point Beam Measurement</div>
<div class="tb" style="left:818px;top:394px;width:56px;height:18px;background:#fff;color:#606060;">1</div>
<div class="cb cbd" style="left:610px;top:420px"></div>
<div class="t n d" style="left:629px;top:418px;">Beam Off During Spectrometer Motion</div>
<div class="cb" style="left:610px;top:436px"></div>
<div class="t b" style="left:629px;top:434px;">Use Alternating On And Off Peak Acquire</div>
<div class="cb" style="left:610px;top:468px"><svg width="11" height="11"><path d="M1 3h1v3h-1zM2 4h1v3h-1zM3 5h1v3h-1zM4 4h1v3h-1zM5 3h1v3h-1zM6 2h1v3h-1zM7 1h1v3h-1z" fill="#000"/></svg></div>
<div class="t n" style="left:629px;top:466px;">Load Standard Data From File Setup</div>
<div class="cb" style="left:610px;top:484px"></div>
<div class="t n" style="left:629px;top:482px;">Do Not Display Standard Images</div>
<div class="cb" style="left:610px;top:516px"></div>
<div class="t b" style="left:629px;top:514px;">Use Last Unknown As Wavescan Setup</div>
<div class="cb" style="left:610px;top:532px"></div>
<div class="t b" style="left:629px;top:530px;">Use Unknown Count Time For Interf. Std</div>
<div class="cb" style="left:610px;top:564px"></div>
<div class="t b" style="left:629px;top:562px;">Use Decontamination/Incubation Delay</div>
<div class="t n" style="left:634px;top:577px;">Decontamination/Incubation Delay</div>
<div class="tb" style="left:818px;top:579px;width:56px;height:18px;background:#fff;color:#000;">0</div>
<div class="t n d" style="left:610px;top:609px;">Auto Focus Threshold (JEOL only)</div>
<div class="tb" style="left:818px;top:610px;width:56px;height:18px;background:#fff;color:#606060;">.33</div>
<div class="cb" style="left:610px;top:644px"></div>
<div class="t b" style="left:629px;top:642px;">Use Only Digitized Standard Positions</div>
<div class="cb" style="left:610px;top:660px"></div>
<div class="t b" style="left:629px;top:658px;">Use Current Instrument Conditions Always</div>
<div class="cb" style="left:610px;top:684px"></div>
<div class="t b" style="left:629px;top:682px;">Use Penepma For WDS Simulation</div>
<div class="t b" style="left:610px;top:698px;">Penepma Minimum Electron Energy</div>
<div class="tb" style="left:818px;top:698px;width:56px;height:18px;background:#fff;color:#000;">1</div>
<div class="cb" style="left:610px;top:732px"><svg width="11" height="11"><path d="M1 3h1v3h-1zM2 4h1v3h-1zM3 5h1v3h-1zM4 4h1v3h-1zM5 3h1v3h-1zM6 2h1v3h-1zM7 1h1v3h-1z" fill="#000"/></svg></div>
<div class="t b" style="left:629px;top:730px;">Use Automated PHA Control</div>
<div class="cb cbd" style="left:610px;top:748px"></div>
<div class="t b d" style="left:629px;top:746px;">Use MCA PHA Acquisition Hardware</div>
<div class="t b" style="left:906px;top:33px;width:40px;text-align:center">1</div>
<div class="t" style="left:902px;top:46px;width:40px;text-align:center;font-weight:bold;font-size:10px;line-height:12px;transform:scaleX(0.85)">TAP</div>
<div class="t b" style="left:954px;top:33px;width:40px;text-align:center">2</div>
<div class="t" style="left:950px;top:46px;width:40px;text-align:center;font-weight:bold;font-size:10px;line-height:12px;transform:scaleX(0.85)">TAP</div>
<div class="t b" style="left:1002px;top:33px;width:40px;text-align:center">3</div>
<div class="t" style="left:998px;top:46px;width:40px;text-align:center;font-weight:bold;font-size:10px;line-height:12px;transform:scaleX(0.85)">LiF</div>
<div class="t b" style="left:1050px;top:33px;width:40px;text-align:center">4</div>
<div class="t" style="left:1046px;top:46px;width:40px;text-align:center;font-weight:bold;font-size:10px;line-height:12px;transform:scaleX(0.85)">PETJ</div>
<div class="t b" style="left:1098px;top:33px;width:40px;text-align:center">5</div>
<div class="t" style="left:1094px;top:46px;width:40px;text-align:center;font-weight:bold;font-size:10px;line-height:12px;transform:scaleX(0.85)">LiFH</div>
<div style="left:897px;top:57px;width:243px;height:339px;background:#fff"></div>
<div style="left:898px;top:58px;width:241px;height:337px;background:#000"></div>
<div style="left:899px;top:66px;width:7px;height:328px;background:#ffff00"></div>
<div style="left:908px;top:100px;width:38px;height:136px;background:#ff5050"></div>
<div class="t" style="left:908px;top:99px;width:38px;text-align:center;font-weight:bold;font-size:9px;line-height:12px;color:#101010">Mg</div>
<div style="left:908px;top:247px;width:38px;height:135px;background:#ff5050"></div>
<div class="t" style="left:908px;top:246px;width:38px;text-align:center;font-weight:bold;font-size:9px;line-height:12px;color:#101010">Na</div>
<div style="left:908px;top:386px;width:38px;height:8px;background:#ff0000"></div>
<div style="left:947px;top:68px;width:7px;height:326px;background:#ffff00"></div>
<div style="left:956px;top:102px;width:38px;height:136px;background:#ff5050"></div>
<div class="t" style="left:956px;top:101px;width:38px;text-align:center;font-weight:bold;font-size:9px;line-height:12px;color:#101010">Si</div>
<div style="left:956px;top:247px;width:38px;height:135px;background:#ff5050"></div>
<div class="t" style="left:956px;top:246px;width:38px;text-align:center;font-weight:bold;font-size:9px;line-height:12px;color:#101010">Al</div>
<div style="left:956px;top:386px;width:38px;height:8px;background:#ff0000"></div>
<div style="left:995px;top:59px;width:7px;height:335px;background:#ffff00"></div>
<div style="left:1004px;top:93px;width:38px;height:106px;background:#ff5050"></div>
<div class="t" style="left:1004px;top:92px;width:38px;text-align:center;font-weight:bold;font-size:9px;line-height:12px;color:#101010">Co</div>
<div style="left:1004px;top:208px;width:38px;height:91px;background:#ff5050"></div>
<div class="t" style="left:1004px;top:207px;width:38px;text-align:center;font-weight:bold;font-size:9px;line-height:12px;color:#101010">Fe</div>
<div style="left:1004px;top:307px;width:38px;height:75px;background:#ff5050"></div>
<div class="t" style="left:1004px;top:306px;width:38px;text-align:center;font-weight:bold;font-size:9px;line-height:12px;color:#101010">Mn</div>
<div style="left:1004px;top:386px;width:38px;height:8px;background:#ff0000"></div>
<div style="left:1043px;top:67px;width:7px;height:327px;background:#ffff00"></div>
<div style="left:1052px;top:102px;width:38px;height:76px;background:#ff5050"></div>
<div class="t" style="left:1052px;top:101px;width:38px;text-align:center;font-weight:bold;font-size:9px;line-height:12px;color:#101010">Ca</div>
<div style="left:1052px;top:187px;width:38px;height:61px;background:#ff5050"></div>
<div class="t" style="left:1052px;top:186px;width:38px;text-align:center;font-weight:bold;font-size:9px;line-height:12px;color:#101010">K</div>
<div style="left:1052px;top:265px;width:38px;height:46px;background:#ff5050"></div>
<div class="t" style="left:1052px;top:264px;width:38px;text-align:center;font-weight:bold;font-size:9px;line-height:12px;color:#101010">S</div>
<div style="left:1052px;top:322px;width:38px;height:60px;background:#ff5050"></div>
<div class="t" style="left:1052px;top:321px;width:38px;text-align:center;font-weight:bold;font-size:9px;line-height:12px;color:#101010">P</div>
<div style="left:1052px;top:386px;width:38px;height:8px;background:#ff0000"></div>
<div style="left:1091px;top:88px;width:7px;height:306px;background:#ffff00"></div>
<div style="left:1100px;top:122px;width:38px;height:76px;background:#ff5050"></div>
<div class="t" style="left:1100px;top:121px;width:38px;text-align:center;font-weight:bold;font-size:9px;line-height:12px;color:#101010">Ni</div>
<div style="left:1100px;top:216px;width:38px;height:76px;background:#ff5050"></div>
<div class="t" style="left:1100px;top:215px;width:38px;text-align:center;font-weight:bold;font-size:9px;line-height:12px;color:#101010">Cr</div>
<div style="left:1100px;top:307px;width:38px;height:75px;background:#ff5050"></div>
<div class="t" style="left:1100px;top:306px;width:38px;text-align:center;font-weight:bold;font-size:9px;line-height:12px;color:#101010">Ti</div>
<div style="left:1100px;top:386px;width:38px;height:8px;background:#ff0000"></div>
<div class="t b" style="left:1147px;top:49px">112 sec</div>
<div class="t b" style="left:1147px;top:65px">1 min</div>
<div class="t b" style="left:1147px;top:377px;color:#e00000">1</div>
<div class="gb" style="left:898px;top:416px;width:288px;height:114px"></div>
<div class="gt" style="left:905px;top:409px">Automatic Analysis and Output Modes</div>
<div class="cb" style="left:906px;top:436px"></div>
<div class="t b" style="left:925px;top:434px;">Use Automatic Analysis After Acquisition</div>
<svg style="left:923px;top:460px" width="12" height="12"><path d="M5 1h2v1h-2zM3 2h6v1h-6zM3 3h6v1h-6zM2 4h8v1h-8zM2 5h8v1h-8zM2 6h8v1h-8zM2 7h8v1h-8zM3 8h6v1h-6zM3 9h6v1h-6zM5 10h2v1h-2z" fill="#f0f0f0"/><path d="M4 0h1v1h-1zM5 0h1v1h-1zM6 0h1v1h-1zM7 0h1v1h-1zM2 1h1v1h-1zM3 1h1v1h-1zM8 1h1v1h-1zM9 1h1v1h-1zM1 2h1v1h-1zM1 3h1v1h-1zM0 4h1v1h-1zM0 5h1v1h-1zM0 6h1v1h-1zM0 7h1v1h-1zM1 8h1v1h-1zM1 9h1v1h-1z" fill="#a0a0a0"/><path d="M10 2h1v1h-1zM10 3h1v1h-1zM11 4h1v1h-1zM11 5h1v1h-1zM11 6h1v1h-1zM11 7h1v1h-1zM10 8h1v1h-1zM10 9h1v1h-1zM2 10h1v1h-1zM3 10h1v1h-1zM8 10h1v1h-1zM9 10h1v1h-1zM4 11h1v1h-1zM5 11h1v1h-1zM6 11h1v1h-1zM7 11h1v1h-1z" fill="#fff"/><path d="M4 1h1v1h-1zM5 1h1v1h-1zM6 1h1v1h-1zM7 1h1v1h-1zM2 2h1v1h-1zM3 2h1v1h-1zM8 2h1v1h-1zM9 2h1v1h-1zM2 3h1v1h-1zM1 4h1v1h-1zM1 5h1v1h-1zM1 6h1v1h-1zM1 7h1v1h-1zM2 8h1v1h-1zM2 9h1v1h-1z" fill="#696969"/><path d="M9 3h1v1h-1zM10 4h1v1h-1zM10 5h1v1h-1zM10 6h1v1h-1zM10 7h1v1h-1zM9 8h1v1h-1zM3 9h1v1h-1zM8 9h1v1h-1zM9 9h1v1h-1zM4 10h1v1h-1zM5 10h1v1h-1zM6 10h1v1h-1zM7 10h1v1h-1z" fill="#e3e3e3"/><path d="M5 4h2v1h1v2h-1v1h-2v-1h-1v-2h1z" fill="#a0a0a0"/></svg>
<div class="t n d" style="left:940px;top:458px;">Export Weight Percents To Excel Link</div>
<svg style="left:923px;top:476px" width="12" height="12"><path d="M5 1h2v1h-2zM3 2h6v1h-6zM3 3h6v1h-6zM2 4h8v1h-8zM2 5h8v1h-8zM2 6h8v1h-8zM2 7h8v1h-8zM3 8h6v1h-6zM3 9h6v1h-6zM5 10h2v1h-2z" fill="#f0f0f0"/><path d="M4 0h1v1h-1zM5 0h1v1h-1zM6 0h1v1h-1zM7 0h1v1h-1zM2 1h1v1h-1zM3 1h1v1h-1zM8 1h1v1h-1zM9 1h1v1h-1zM1 2h1v1h-1zM1 3h1v1h-1zM0 4h1v1h-1zM0 5h1v1h-1zM0 6h1v1h-1zM0 7h1v1h-1zM1 8h1v1h-1zM1 9h1v1h-1z" fill="#a0a0a0"/><path d="M10 2h1v1h-1zM10 3h1v1h-1zM11 4h1v1h-1zM11 5h1v1h-1zM11 6h1v1h-1zM11 7h1v1h-1zM10 8h1v1h-1zM10 9h1v1h-1zM2 10h1v1h-1zM3 10h1v1h-1zM8 10h1v1h-1zM9 10h1v1h-1zM4 11h1v1h-1zM5 11h1v1h-1zM6 11h1v1h-1zM7 11h1v1h-1z" fill="#fff"/><path d="M4 1h1v1h-1zM5 1h1v1h-1zM6 1h1v1h-1zM7 1h1v1h-1zM2 2h1v1h-1zM3 2h1v1h-1zM8 2h1v1h-1zM9 2h1v1h-1zM2 3h1v1h-1zM1 4h1v1h-1zM1 5h1v1h-1zM1 6h1v1h-1zM1 7h1v1h-1zM2 8h1v1h-1zM2 9h1v1h-1z" fill="#696969"/><path d="M9 3h1v1h-1zM10 4h1v1h-1zM10 5h1v1h-1zM10 6h1v1h-1zM10 7h1v1h-1zM9 8h1v1h-1zM3 9h1v1h-1zM8 9h1v1h-1zM9 9h1v1h-1zM4 10h1v1h-1zM5 10h1v1h-1zM6 10h1v1h-1zM7 10h1v1h-1z" fill="#e3e3e3"/></svg>
<div class="t n d" style="left:940px;top:474px;">Export Raw K-Ratios To Excel Link</div>
<svg style="left:923px;top:492px" width="12" height="12"><path d="M5 1h2v1h-2zM3 2h6v1h-6zM3 3h6v1h-6zM2 4h8v1h-8zM2 5h8v1h-8zM2 6h8v1h-8zM2 7h8v1h-8zM3 8h6v1h-6zM3 9h6v1h-6zM5 10h2v1h-2z" fill="#f0f0f0"/><path d="M4 0h1v1h-1zM5 0h1v1h-1zM6 0h1v1h-1zM7 0h1v1h-1zM2 1h1v1h-1zM3 1h1v1h-1zM8 1h1v1h-1zM9 1h1v1h-1zM1 2h1v1h-1zM1 3h1v1h-1zM0 4h1v1h-1zM0 5h1v1h-1zM0 6h1v1h-1zM0 7h1v1h-1zM1 8h1v1h-1zM1 9h1v1h-1z" fill="#a0a0a0"/><path d="M10 2h1v1h-1zM10 3h1v1h-1zM11 4h1v1h-1zM11 5h1v1h-1zM11 6h1v1h-1zM11 7h1v1h-1zM10 8h1v1h-1zM10 9h1v1h-1zM2 10h1v1h-1zM3 10h1v1h-1zM8 10h1v1h-1zM9 10h1v1h-1zM4 11h1v1h-1zM5 11h1v1h-1zM6 11h1v1h-1zM7 11h1v1h-1z" fill="#fff"/><path d="M4 1h1v1h-1zM5 1h1v1h-1zM6 1h1v1h-1zM7 1h1v1h-1zM2 2h1v1h-1zM3 2h1v1h-1zM8 2h1v1h-1zM9 2h1v1h-1zM2 3h1v1h-1zM1 4h1v1h-1zM1 5h1v1h-1zM1 6h1v1h-1zM1 7h1v1h-1zM2 8h1v1h-1zM2 9h1v1h-1z" fill="#696969"/><path d="M9 3h1v1h-1zM10 4h1v1h-1zM10 5h1v1h-1zM10 6h1v1h-1zM10 7h1v1h-1zM9 8h1v1h-1zM3 9h1v1h-1zM8 9h1v1h-1zM9 9h1v1h-1zM4 10h1v1h-1zM5 10h1v1h-1zM6 10h1v1h-1zM7 10h1v1h-1z" fill="#e3e3e3"/></svg>
<div class="t n d" style="left:940px;top:490px;">Export Counts/Sec To Excel Link</div>
<svg style="left:923px;top:508px" width="12" height="12"><path d="M5 1h2v1h-2zM3 2h6v1h-6zM3 3h6v1h-6zM2 4h8v1h-8zM2 5h8v1h-8zM2 6h8v1h-8zM2 7h8v1h-8zM3 8h6v1h-6zM3 9h6v1h-6zM5 10h2v1h-2z" fill="#f0f0f0"/><path d="M4 0h1v1h-1zM5 0h1v1h-1zM6 0h1v1h-1zM7 0h1v1h-1zM2 1h1v1h-1zM3 1h1v1h-1zM8 1h1v1h-1zM9 1h1v1h-1zM1 2h1v1h-1zM1 3h1v1h-1zM0 4h1v1h-1zM0 5h1v1h-1zM0 6h1v1h-1zM0 7h1v1h-1zM1 8h1v1h-1zM1 9h1v1h-1z" fill="#a0a0a0"/><path d="M10 2h1v1h-1zM10 3h1v1h-1zM11 4h1v1h-1zM11 5h1v1h-1zM11 6h1v1h-1zM11 7h1v1h-1zM10 8h1v1h-1zM10 9h1v1h-1zM2 10h1v1h-1zM3 10h1v1h-1zM8 10h1v1h-1zM9 10h1v1h-1zM4 11h1v1h-1zM5 11h1v1h-1zM6 11h1v1h-1zM7 11h1v1h-1z" fill="#fff"/><path d="M4 1h1v1h-1zM5 1h1v1h-1zM6 1h1v1h-1zM7 1h1v1h-1zM2 2h1v1h-1zM3 2h1v1h-1zM8 2h1v1h-1zM9 2h1v1h-1zM2 3h1v1h-1zM1 4h1v1h-1zM1 5h1v1h-1zM1 6h1v1h-1zM1 7h1v1h-1zM2 8h1v1h-1zM2 9h1v1h-1z" fill="#696969"/><path d="M9 3h1v1h-1zM10 4h1v1h-1zM10 5h1v1h-1zM10 6h1v1h-1zM10 7h1v1h-1zM9 8h1v1h-1zM3 9h1v1h-1zM8 9h1v1h-1zM9 9h1v1h-1zM4 10h1v1h-1zM5 10h1v1h-1zM6 10h1v1h-1zM7 10h1v1h-1z" fill="#e3e3e3"/></svg>
<div class="t n d" style="left:940px;top:506px;">Export Raw Counts (i*t) To Excel Link</div>
<div class="gb" style="left:898px;top:552px;width:288px;height:121px"></div>
<div class="gt" style="left:905px;top:545px">Automated Image Acquisition</div>
<div class="cb" style="left:906px;top:572px"></div>
<div class="t b" style="left:925px;top:570px;">Acquire Automated Images on Standards</div>
<div class="cb" style="left:906px;top:588px"></div>
<div class="t b" style="left:925px;top:586px;">Acquire Automated Images on Unknowns</div>
<div class="cb" style="left:906px;top:604px"></div>
<div class="t b" style="left:925px;top:602px;">Acquire Automated Images on Wavescans</div>
<svg style="left:915px;top:628px" width="12" height="12"><path d="M5 1h2v1h-2zM3 2h6v1h-6zM3 3h6v1h-6zM2 4h8v1h-8zM2 5h8v1h-8zM2 6h8v1h-8zM2 7h8v1h-8zM3 8h6v1h-6zM3 9h6v1h-6zM5 10h2v1h-2z" fill="#fff"/><path d="M4 0h1v1h-1zM5 0h1v1h-1zM6 0h1v1h-1zM7 0h1v1h-1zM2 1h1v1h-1zM3 1h1v1h-1zM8 1h1v1h-1zM9 1h1v1h-1zM1 2h1v1h-1zM1 3h1v1h-1zM0 4h1v1h-1zM0 5h1v1h-1zM0 6h1v1h-1zM0 7h1v1h-1zM1 8h1v1h-1zM1 9h1v1h-1z" fill="#a0a0a0"/><path d="M10 2h1v1h-1zM10 3h1v1h-1zM11 4h1v1h-1zM11 5h1v1h-1zM11 6h1v1h-1zM11 7h1v1h-1zM10 8h1v1h-1zM10 9h1v1h-1zM2 10h1v1h-1zM3 10h1v1h-1zM8 10h1v1h-1zM9 10h1v1h-1zM4 11h1v1h-1zM5 11h1v1h-1zM6 11h1v1h-1zM7 11h1v1h-1z" fill="#fff"/><path d="M4 1h1v1h-1zM5 1h1v1h-1zM6 1h1v1h-1zM7 1h1v1h-1zM2 2h1v1h-1zM3 2h1v1h-1zM8 2h1v1h-1zM9 2h1v1h-1zM2 3h1v1h-1zM1 4h1v1h-1zM1 5h1v1h-1zM1 6h1v1h-1zM1 7h1v1h-1zM2 8h1v1h-1zM2 9h1v1h-1z" fill="#696969"/><path d="M9 3h1v1h-1zM10 4h1v1h-1zM10 5h1v1h-1zM10 6h1v1h-1zM10 7h1v1h-1zM9 8h1v1h-1zM3 9h1v1h-1zM8 9h1v1h-1zM9 9h1v1h-1zM4 10h1v1h-1zM5 10h1v1h-1zM6 10h1v1h-1zM7 10h1v1h-1z" fill="#e3e3e3"/></svg>
<div class="t n" style="left:932px;top:626px;">Before</div>
<svg style="left:979px;top:628px" width="12" height="12"><path d="M5 1h2v1h-2zM3 2h6v1h-6zM3 3h6v1h-6zM2 4h8v1h-8zM2 5h8v1h-8zM2 6h8v1h-8zM2 7h8v1h-8zM3 8h6v1h-6zM3 9h6v1h-6zM5 10h2v1h-2z" fill="#fff"/><path d="M4 0h1v1h-1zM5 0h1v1h-1zM6 0h1v1h-1zM7 0h1v1h-1zM2 1h1v1h-1zM3 1h1v1h-1zM8 1h1v1h-1zM9 1h1v1h-1zM1 2h1v1h-1zM1 3h1v1h-1zM0 4h1v1h-1zM0 5h1v1h-1zM0 6h1v1h-1zM0 7h1v1h-1zM1 8h1v1h-1zM1 9h1v1h-1z" fill="#a0a0a0"/><path d="M10 2h1v1h-1zM10 3h1v1h-1zM11 4h1v1h-1zM11 5h1v1h-1zM11 6h1v1h-1zM11 7h1v1h-1zM10 8h1v1h-1zM10 9h1v1h-1zM2 10h1v1h-1zM3 10h1v1h-1zM8 10h1v1h-1zM9 10h1v1h-1zM4 11h1v1h-1zM5 11h1v1h-1zM6 11h1v1h-1zM7 11h1v1h-1z" fill="#fff"/><path d="M4 1h1v1h-1zM5 1h1v1h-1zM6 1h1v1h-1zM7 1h1v1h-1zM2 2h1v1h-1zM3 2h1v1h-1zM8 2h1v1h-1zM9 2h1v1h-1zM2 3h1v1h-1zM1 4h1v1h-1zM1 5h1v1h-1zM1 6h1v1h-1zM1 7h1v1h-1zM2 8h1v1h-1zM2 9h1v1h-1z" fill="#696969"/><path d="M9 3h1v1h-1zM10 4h1v1h-1zM10 5h1v1h-1zM10 6h1v1h-1zM10 7h1v1h-1zM9 8h1v1h-1zM3 9h1v1h-1zM8 9h1v1h-1zM9 9h1v1h-1zM4 10h1v1h-1zM5 10h1v1h-1zM6 10h1v1h-1zM7 10h1v1h-1z" fill="#e3e3e3"/><path d="M5 4h2v1h1v2h-1v1h-2v-1h-1v-2h1z" fill="#000"/></svg>
<div class="t n" style="left:996px;top:626px;">After</div>
<svg style="left:1035px;top:628px" width="12" height="12"><path d="M5 1h2v1h-2zM3 2h6v1h-6zM3 3h6v1h-6zM2 4h8v1h-8zM2 5h8v1h-8zM2 6h8v1h-8zM2 7h8v1h-8zM3 8h6v1h-6zM3 9h6v1h-6zM5 10h2v1h-2z" fill="#fff"/><path d="M4 0h1v1h-1zM5 0h1v1h-1zM6 0h1v1h-1zM7 0h1v1h-1zM2 1h1v1h-1zM3 1h1v1h-1zM8 1h1v1h-1zM9 1h1v1h-1zM1 2h1v1h-1zM1 3h1v1h-1zM0 4h1v1h-1zM0 5h1v1h-1zM0 6h1v1h-1zM0 7h1v1h-1zM1 8h1v1h-1zM1 9h1v1h-1z" fill="#a0a0a0"/><path d="M10 2h1v1h-1zM10 3h1v1h-1zM11 4h1v1h-1zM11 5h1v1h-1zM11 6h1v1h-1zM11 7h1v1h-1zM10 8h1v1h-1zM10 9h1v1h-1zM2 10h1v1h-1zM3 10h1v1h-1zM8 10h1v1h-1zM9 10h1v1h-1zM4 11h1v1h-1zM5 11h1v1h-1zM6 11h1v1h-1zM7 11h1v1h-1z" fill="#fff"/><path d="M4 1h1v1h-1zM5 1h1v1h-1zM6 1h1v1h-1zM7 1h1v1h-1zM2 2h1v1h-1zM3 2h1v1h-1zM8 2h1v1h-1zM9 2h1v1h-1zM2 3h1v1h-1zM1 4h1v1h-1zM1 5h1v1h-1zM1 6h1v1h-1zM1 7h1v1h-1zM2 8h1v1h-1zM2 9h1v1h-1z" fill="#696969"/><path d="M9 3h1v1h-1zM10 4h1v1h-1zM10 5h1v1h-1zM10 6h1v1h-1zM10 7h1v1h-1zM9 8h1v1h-1zM3 9h1v1h-1zM8 9h1v1h-1zM9 9h1v1h-1zM4 10h1v1h-1zM5 10h1v1h-1zM6 10h1v1h-1zM7 10h1v1h-1z" fill="#e3e3e3"/></svg>
<div class="t n" style="left:1052px;top:626px;">Both</div>
<svg style="left:1091px;top:628px" width="12" height="12"><path d="M5 1h2v1h-2zM3 2h6v1h-6zM3 3h6v1h-6zM2 4h8v1h-8zM2 5h8v1h-8zM2 6h8v1h-8zM2 7h8v1h-8zM3 8h6v1h-6zM3 9h6v1h-6zM5 10h2v1h-2z" fill="#fff"/><path d="M4 0h1v1h-1zM5 0h1v1h-1zM6 0h1v1h-1zM7 0h1v1h-1zM2 1h1v1h-1zM3 1h1v1h-1zM8 1h1v1h-1zM9 1h1v1h-1zM1 2h1v1h-1zM1 3h1v1h-1zM0 4h1v1h-1zM0 5h1v1h-1zM0 6h1v1h-1zM0 7h1v1h-1zM1 8h1v1h-1zM1 9h1v1h-1z" fill="#a0a0a0"/><path d="M10 2h1v1h-1zM10 3h1v1h-1zM11 4h1v1h-1zM11 5h1v1h-1zM11 6h1v1h-1zM11 7h1v1h-1zM10 8h1v1h-1zM10 9h1v1h-1zM2 10h1v1h-1zM3 10h1v1h-1zM8 10h1v1h-1zM9 10h1v1h-1zM4 11h1v1h-1zM5 11h1v1h-1zM6 11h1v1h-1zM7 11h1v1h-1z" fill="#fff"/><path d="M4 1h1v1h-1zM5 1h1v1h-1zM6 1h1v1h-1zM7 1h1v1h-1zM2 2h1v1h-1zM3 2h1v1h-1zM8 2h1v1h-1zM9 2h1v1h-1zM2 3h1v1h-1zM1 4h1v1h-1zM1 5h1v1h-1zM1 6h1v1h-1zM1 7h1v1h-1zM2 8h1v1h-1zM2 9h1v1h-1z" fill="#696969"/><path d="M9 3h1v1h-1zM10 4h1v1h-1zM10 5h1v1h-1zM10 6h1v1h-1zM10 7h1v1h-1zM9 8h1v1h-1zM3 9h1v1h-1zM8 9h1v1h-1zM9 9h1v1h-1zM4 10h1v1h-1zM5 10h1v1h-1zM6 10h1v1h-1zM7 10h1v1h-1z" fill="#e3e3e3"/></svg>
<div class="t n" style="left:1108px;top:626px;">Confirm Only</div>
<div class="cb" style="left:906px;top:650px"></div>
<div class="t n" style="left:924px;top:649px;">Use Sample Mag, KeV, nA for Automated Imaging</div>
<div class="btn" style="left:890px;top:698px;width:145px;height:25px;background:#ffff80;color:#000;font-weight:bold;line-height:24px;font-size:12px;">Change All To Off-Peak</div>
<div class="btn" style="left:890px;top:723px;width:145px;height:23px;background:#ffff80;color:#000;font-weight:bold;line-height:22px;font-size:12px;">Change All To MAN</div>
<div class="btn" style="left:890px;top:746px;width:145px;height:25px;background:#ffff80;color:#000;font-weight:bold;line-height:24px;font-size:12px;">Change All To MPB</div>
<div style="left:1050px;top:698px;width:65px;height:57px;border:1px solid #000;"><div style="left:0;top:0;right:0;bottom:0;background:#c0ffc0;border:1px solid #fff;border-right-color:#696969;border-bottom-color:#696969;text-align:center;line-height:55px;font-weight:bold;font-size:12px">OK</div></div>
<div class="btn" style="left:1122px;top:698px;width:65px;height:57px;background:#f0f0f0;color:#000;font-weight:bold;line-height:56px;font-size:12px;">Cancel</div>
<div style="left:296px;top:617px;width:419px;height:96px;border:2px solid #f0147a"></div>
<div style="left:402px;top:687px;width:304px;height:19px;padding-top:1px;background:#ffffe1;border:1px solid #767676;font-size:12.3px;line-height:16px;padding-left:1px;white-space:nowrap;color:#000">Minimum acquisition weight percent for quick standards</div>
</body></html>
